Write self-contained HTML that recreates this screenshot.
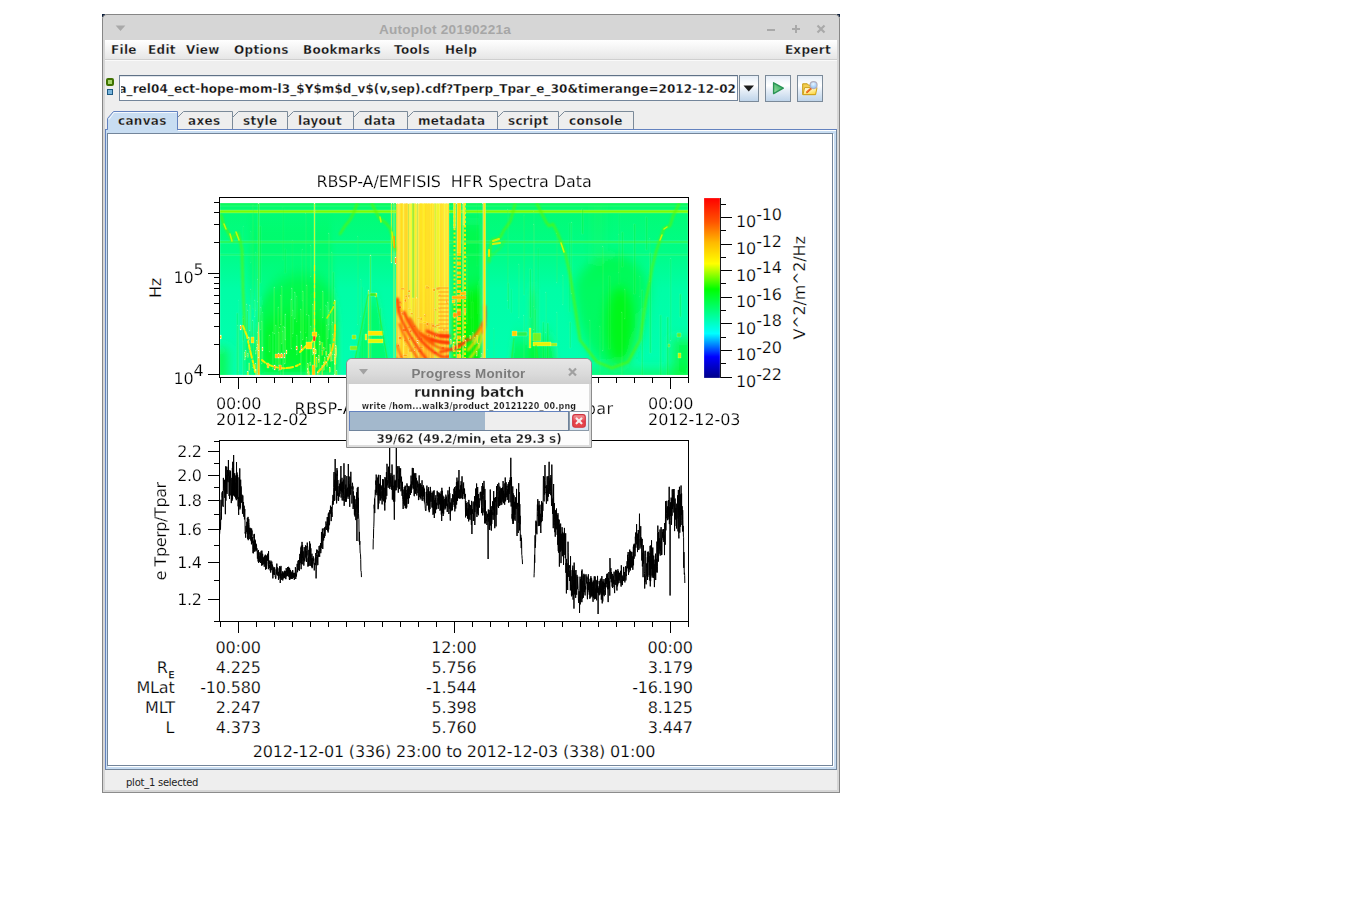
<!DOCTYPE html><html><head><meta charset="utf-8"><title>Autoplot 20190221a</title><style>
html,body{margin:0;padding:0;background:#fff;}
body{width:1345px;height:916px;overflow:hidden;position:relative;font-family:"DejaVu Sans","Liberation Sans",sans-serif;}
.abs{position:absolute;}
#win{position:absolute;left:102px;top:14px;width:738px;height:779px;background:#d6d6d6;border-radius:5px 5px 0 0;box-sizing:border-box;border:1px solid #868686;border-bottom-color:#8c8c8c;}
.b13{font:bold 12px "DejaVu Sans","Liberation Sans",sans-serif;letter-spacing:0.3px;color:#151515;white-space:nowrap;position:absolute;line-height:16px;-webkit-text-stroke:0.35px rgba(255,255,255,0.75);}
#menubar{position:absolute;left:105px;top:40px;width:732px;height:19px;background:linear-gradient(#ffffff,#f4f4f4 45%,#e6e6e6);border-bottom:1px solid #cfcfcf;}
#main{position:absolute;left:105px;top:60px;width:732px;height:730px;background:#eeeeee;border-top:1px solid #fafafa;box-sizing:border-box;}
.btn{position:absolute;box-sizing:border-box;border:1px solid #7b8a99;background:linear-gradient(#e4ecf6 0%,#f4f8fc 20%,#ffffff 38%,#e6eef7 58%,#bfd4ea 100%);}
.tab{position:absolute;box-sizing:border-box;}
</style></head><body>
<div class="abs" style="left:102px;top:14px;width:3px;height:3px;background:#0b1d3a"></div>
<div class="abs" style="left:837px;top:14px;width:3px;height:3px;background:#0b1d3a"></div>
<div id="win"></div>
<svg class="abs" style="left:115px;top:23.6px" width="12" height="8"><path d="M0.6 1.6 L10.4 1.6 L5.5 7 Z" fill="#a9a9a9"/></svg>
<div class="abs" style="left:378.5px;top:20.8px;width:133px;text-align:center;font:bold 13.6px 'Liberation Sans',sans-serif;letter-spacing:0.25px;color:#a6a6a6;white-space:nowrap;line-height:17px">Autoplot 20190221a</div>
<svg class="abs" style="left:760px;top:20px" width="76" height="18"><g stroke="#a9a9a9" stroke-width="2" fill="none"><path d="M7 10 H15"/><path d="M32 9 H40 M36 5 V13"/><path d="M57.5 5.5 L64.5 12.5 M64.5 5.5 L57.5 12.5" stroke-width="2.2"/></g></svg>
<div id="menubar"></div>
<div class="b13" style="left:111px;top:42px">File</div>
<div class="b13" style="left:148px;top:42px">Edit</div>
<div class="b13" style="left:186px;top:42px">View</div>
<div class="b13" style="left:234px;top:42px">Options</div>
<div class="b13" style="left:303px;top:42px">Bookmarks</div>
<div class="b13" style="left:394px;top:42px">Tools</div>
<div class="b13" style="left:445px;top:42px">Help</div>
<div class="b13" style="left:700px;width:131px;text-align:right;top:42px">Expert</div>
<div id="main"></div>
<div class="abs" style="left:106px;top:78px;width:8px;height:8px;box-sizing:border-box;border:2px solid #3f7200;border-radius:2px;background:#a5d46a"></div>
<div class="abs" style="left:107px;top:89px;width:6px;height:6px;box-sizing:border-box;border:1px solid #1d5a85;background:#79b5dc"></div>
<div class="abs" style="left:119px;top:75px;width:619px;height:26px;box-sizing:border-box;border:1px solid #73859a;border-top-color:#5f7186;background:#fff;box-shadow:inset 0 1px 0 #dfe4ea"></div>
<div class="abs" style="left:121px;top:77px;width:616px;height:22px;overflow:hidden"><div class="b13" style="right:1px;top:4px;color:#111;letter-spacing:0.07px">rbsp-a_rel04_ect-hope-mom-l3_$Y$m$d_v$(v,sep).cdf?Tperp_Tpar_e_30&amp;timerange=2012-12-02</div></div>
<div class="btn" style="left:739px;top:75px;width:20px;height:27px"></div>
<svg class="abs" style="left:739px;top:75px" width="20" height="27"><path d="M4.5 10.5 L15 10.5 L9.75 16.5 Z" fill="#1c1c1c"/></svg>
<div class="btn" style="left:765px;top:75px;width:26px;height:27px"></div>
<svg class="abs" style="left:765px;top:75px" width="26" height="27"><defs><linearGradient id="pg1" x1="0" y1="1" x2="1" y2="0"><stop offset="0" stop-color="#a8e0a8"/><stop offset="0.5" stop-color="#5cc27a"/><stop offset="1" stop-color="#2fa35a"/></linearGradient></defs><path d="M8.6 7.8 L18.3 13.2 L8.6 18.6 Z" fill="url(#pg1)" stroke="#2a9455" stroke-width="1.4" stroke-linejoin="round"/></svg>
<div class="btn" style="left:797px;top:75px;width:26px;height:27px"></div>
<svg class="abs" style="left:797px;top:75px" width="26" height="27">
<defs><linearGradient id="fg1" x1="0" y1="0" x2="0.6" y2="1"><stop offset="0" stop-color="#fffdf0"/><stop offset="0.55" stop-color="#fff0a0"/><stop offset="1" stop-color="#ffd84a"/></linearGradient>
<radialGradient id="mg1" cx="0.45" cy="0.35" r="0.7"><stop offset="0" stop-color="#eaf5ff"/><stop offset="0.5" stop-color="#b6d8fc"/><stop offset="1" stop-color="#8fc0f4"/></radialGradient></defs>
<path d="M5.7 8.8 H10.3 L11.6 10.2 H18.4 V19.6 H5.7 Z" fill="#f3cf52" stroke="#c79b10" stroke-width="1"/>
<path d="M6 19.6 L7.6 12.6 H20 L18.6 19.6 Z" fill="url(#fg1)" stroke="#cfa21a" stroke-width="1" stroke-linejoin="round"/>
<path d="M9.9 17.4 L14.3 13.2" stroke="#f28a1e" stroke-width="1.9" stroke-linecap="round"/>
<path d="M9.9 17.4 L14.3 13.2" stroke="#e0452a" stroke-width="1.9" stroke-dasharray="0.7 0.9"/>
<circle cx="16.6" cy="10.1" r="3.5" fill="url(#mg1)" stroke="#b3aebd" stroke-width="1.1"/>
</svg>
<svg class="abs" style="left:100px;top:105px" width="745" height="670"><rect x="5.5" y="24.5" width="731.0" height="640.0" fill="#c8ddf2" stroke="#6382bf"/><path d="M736.5 25 V664.5 H5" fill="none" stroke="#73859a"/><path d="M733.5 29 V661.5 H8" fill="none" stroke="#ffffff"/><rect x="7.5" y="28.5" width="725.0" height="632.0" fill="#ffffff" stroke="#73859a"/><path d="M77.5 24.5 L77.5 12.5 L83.5 6.5 L132.5 6.5 L132.5 24.5" fill="#eeeeee" stroke="#7b8a99"/><path d="M132.5 24.5 L132.5 12.5 L138.5 6.5 L187.5 6.5 L187.5 24.5" fill="#eeeeee" stroke="#7b8a99"/><path d="M187.5 24.5 L187.5 12.5 L193.5 6.5 L253.5 6.5 L253.5 24.5" fill="#eeeeee" stroke="#7b8a99"/><path d="M253.5 24.5 L253.5 12.5 L259.5 6.5 L307.5 6.5 L307.5 24.5" fill="#eeeeee" stroke="#7b8a99"/><path d="M307.5 24.5 L307.5 12.5 L313.5 6.5 L397.5 6.5 L397.5 24.5" fill="#eeeeee" stroke="#7b8a99"/><path d="M397.5 24.5 L397.5 12.5 L403.5 6.5 L458.5 6.5 L458.5 24.5" fill="#eeeeee" stroke="#7b8a99"/><path d="M458.5 24.5 L458.5 12.5 L464.5 6.5 L533.5 6.5 L533.5 24.5" fill="#eeeeee" stroke="#7b8a99"/><path d="M7.5 26 L7.5 13.5 L13.5 6.5 L77.5 6.5 L77.5 24.5 L77.5 26 Z" fill="#c8ddf2" stroke="none"/><path d="M5.5 24.5 L7.5 24.5 L7.5 13.5 L13.5 6.5 L77.5 6.5 L77.5 24.5" fill="none" stroke="#6382bf"/><path d="M77 24.5 H737" stroke="#6382bf" fill="none"/><path d="M78 25.5 H736" stroke="#ffffff" fill="none"/><path d="M9 14.5 L14 7.5 H77" stroke="#f4f8fd" fill="none"/></svg>
<div class="b13" style="left:118px;top:113px">canvas</div>
<div class="b13" style="left:188px;top:113px">axes</div>
<div class="b13" style="left:243px;top:113px">style</div>
<div class="b13" style="left:298px;top:113px">layout</div>
<div class="b13" style="left:364px;top:113px">data</div>
<div class="b13" style="left:418px;top:113px">metadata</div>
<div class="b13" style="left:508px;top:113px">script</div>
<div class="b13" style="left:569px;top:113px">console</div>
<div class="abs" style="left:126px;top:776px;font:10px 'DejaVu Sans',sans-serif;letter-spacing:-0.25px;color:#222;line-height:14px;white-space:nowrap">plot_1 selected</div>
<svg class="abs" style="left:108px;top:134px" width="726" height="632" viewBox="108 134 726 632" font-family="'DejaVu Sans','Liberation Sans',sans-serif" font-size="16" fill="#000" stroke="#ffffff" stroke-width="0.22" text-rendering="geometricPrecision">
<defs>
<linearGradient id="cb" x1="0" y1="1" x2="0" y2="0">
<stop offset="0" stop-color="#000089"/><stop offset="0.1176" stop-color="#0000ff"/><stop offset="0.247" stop-color="#00ffff"/><stop offset="0.494" stop-color="#00ff00"/><stop offset="0.635" stop-color="#ffff00"/><stop offset="0.753" stop-color="#ffb900"/><stop offset="0.867" stop-color="#ff5400"/><stop offset="1" stop-color="#ff0000"/>
</linearGradient>
<linearGradient id="base" x1="0" y1="0" x2="0" y2="1">
<stop offset="0" stop-color="#08fc66"/><stop offset="0.05" stop-color="#02fc76"/><stop offset="0.28" stop-color="#00fd86"/><stop offset="0.5" stop-color="#00fea6"/><stop offset="1" stop-color="#00ffb2"/>
</linearGradient>
<filter id="bl6" x="-30%" y="-30%" width="160%" height="160%"><feGaussianBlur stdDeviation="6"/></filter>
<filter id="blv" x="-30%" y="-30%" width="160%" height="160%"><feGaussianBlur stdDeviation="2.2 9"/></filter>
<filter id="bl3" x="-30%" y="-30%" width="160%" height="160%"><feGaussianBlur stdDeviation="3"/></filter>
<filter id="bl1" x="-30%" y="-30%" width="160%" height="160%"><feGaussianBlur stdDeviation="0.8"/></filter>
<linearGradient id="coreg" x1="0" y1="0" x2="0" y2="1"><stop offset="0" stop-color="#ffe800"/><stop offset="0.42" stop-color="#ffdc00"/><stop offset="0.62" stop-color="#ffbc00"/><stop offset="0.8" stop-color="#ffa000"/><stop offset="1" stop-color="#ff9400"/></linearGradient>
<clipPath id="sp"><rect x="220" y="203" width="468" height="172"/></clipPath>
<clipPath id="core"><rect x="396" y="203" width="53" height="172"/></clipPath>
<clipPath id="p2"><rect x="220" y="441" width="468" height="180"/></clipPath>
</defs>
<g clip-path="url(#sp)">
<rect x="220" y="203" width="468" height="172" fill="url(#base)"/>
<g filter="url(#blv)" fill="#00f600">
<path d="M256 380 L256 325 Q260 296 274 286 Q300 266 326 284 Q337 294 339 325 L339 380 Z" opacity="0.5"/>
<path d="M264 372 L264 324 Q295 298 328 320 L332 372 Z" opacity="0.5"/>
<path d="M243 380 L243 335 L257 335 L257 380 Z" opacity="0.3"/>
<path d="M246 300 L250 225 L330 225 L336 300 Z" opacity="0.15"/>
<path d="M451 380 L451 296 L482 286 L482 380 Z" opacity="0.9"/>
<rect x="451" y="222" width="31" height="90" opacity="0.4"/>
<path d="M352 380 L366 300 L378 300 L392 380 Z" opacity="0.35"/>
<path d="M508 380 L513 340 L552 338 L560 380 Z" opacity="0.45"/>
<rect x="529" y="290" width="8" height="90" opacity="0.35"/>
</g>
<g filter="url(#bl6)" fill="#00f600">
<rect x="212" y="348" width="16" height="36" opacity="0.6"/>
<path d="M573 286 Q578 340 598 362 Q612 372 628 362 Q644 338 649 286 Q640 258 612 254 Q585 258 573 286 Z" opacity="0.42"/>
<ellipse cx="620" cy="326" rx="14" ry="40" opacity="0.75"/>
<rect x="672" y="338" width="22" height="44" opacity="0.55"/>
<rect x="560" y="369" width="130" height="12" opacity="0.45"/>
<rect x="596" y="203" width="4" height="60" opacity="0.5"/>
</g>
<rect x="220" y="203" width="468" height="3" fill="#10f858" opacity="0.6"/>
<rect x="220" y="210.2" width="468" height="2.6" fill="#8cff00"/>
<rect x="220" y="209.7" width="468" height="3.6" fill="#50fc00" opacity="0.3"/>
<rect x="220" y="241" width="468" height="2" fill="#18f840" opacity="0.8"/>
<rect x="220" y="254" width="468" height="1.5" fill="#18f850" opacity="0.45"/>
<rect x="332.4" y="272" width="2" height="57" fill="#10f020" opacity="0.23"/>
<rect x="252.4" y="205" width="1.5" height="104" fill="#10f020" opacity="0.21"/>
<rect x="311.0" y="294" width="2" height="74" fill="#10f020" opacity="0.18"/>
<rect x="621.5" y="232" width="2" height="35" fill="#10f020" opacity="0.25"/>
<rect x="533.5" y="211" width="1" height="96" fill="#10f020" opacity="0.16"/>
<rect x="236.4" y="313" width="2" height="67" fill="#10f020" opacity="0.24"/>
<rect x="649.4" y="253" width="2" height="100" fill="#10f020" opacity="0.29"/>
<rect x="284.2" y="249" width="2" height="24" fill="#10f020" opacity="0.14"/>
<rect x="670.0" y="258" width="1.5" height="83" fill="#10f020" opacity="0.18"/>
<rect x="608.7" y="276" width="2" height="73" fill="#10f020" opacity="0.22"/>
<rect x="641.5" y="290" width="1.5" height="113" fill="#10f020" opacity="0.30"/>
<rect x="533.5" y="224" width="1" height="106" fill="#10f020" opacity="0.24"/>
<rect x="320.0" y="309" width="1.5" height="77" fill="#10f020" opacity="0.12"/>
<rect x="518.4" y="264" width="1" height="54" fill="#10f020" opacity="0.18"/>
<rect x="292.0" y="240" width="1" height="97" fill="#10f020" opacity="0.11"/>
<rect x="507.1" y="209" width="1.5" height="92" fill="#10f020" opacity="0.21"/>
<rect x="649.8" y="238" width="1" height="44" fill="#10f020" opacity="0.16"/>
<rect x="257.7" y="279" width="1" height="23" fill="#10f020" opacity="0.29"/>
<rect x="357.3" y="236" width="1.5" height="89" fill="#10f020" opacity="0.16"/>
<rect x="666.8" y="317" width="2" height="58" fill="#10f020" opacity="0.27"/>
<rect x="624.2" y="289" width="1.5" height="30" fill="#10f020" opacity="0.19"/>
<rect x="556.2" y="233" width="1.5" height="50" fill="#10f020" opacity="0.20"/>
<rect x="476.5" y="204" width="1.5" height="62" fill="#10f020" opacity="0.10"/>
<rect x="507.7" y="283" width="1.5" height="26" fill="#10f020" opacity="0.19"/>
<rect x="537.2" y="248" width="2" height="91" fill="#10f020" opacity="0.10"/>
<rect x="250.1" y="289" width="1.5" height="116" fill="#10f020" opacity="0.23"/>
<rect x="360.6" y="279" width="1" height="38" fill="#10f020" opacity="0.16"/>
<rect x="393.3" y="279" width="2" height="50" fill="#10f020" opacity="0.12"/>
<rect x="599.3" y="326" width="1" height="88" fill="#10f020" opacity="0.16"/>
<rect x="325.3" y="305" width="1" height="44" fill="#10f020" opacity="0.24"/>
<rect x="523.4" y="215" width="1.5" height="80" fill="#10f020" opacity="0.23"/>
<rect x="326.1" y="306" width="1" height="116" fill="#10f020" opacity="0.17"/>
<rect x="523.7" y="315" width="1" height="65" fill="#10f020" opacity="0.26"/>
<rect x="237.7" y="325" width="1" height="52" fill="#10f020" opacity="0.27"/>
<rect x="379.8" y="308" width="1.5" height="29" fill="#10f020" opacity="0.22"/>
<rect x="462.5" y="311" width="2" height="66" fill="#10f020" opacity="0.16"/>
<rect x="485.7" y="208" width="1" height="61" fill="#10f020" opacity="0.10"/>
<rect x="659.7" y="315" width="2" height="119" fill="#10f020" opacity="0.21"/>
<rect x="679.4" y="294" width="2" height="23" fill="#10f020" opacity="0.27"/>
<rect x="529.6" y="269" width="1.5" height="49" fill="#10f020" opacity="0.28"/>
<rect x="621.8" y="312" width="1" height="117" fill="#10f020" opacity="0.26"/>
<rect x="242.9" y="318" width="1" height="89" fill="#10f020" opacity="0.28"/>
<rect x="639.4" y="276" width="1" height="21" fill="#10f020" opacity="0.13"/>
<rect x="361.1" y="287" width="2" height="72" fill="#10f020" opacity="0.11"/>
<rect x="645.7" y="217" width="2" height="33" fill="#10f020" opacity="0.26"/>
<rect x="250.5" y="231" width="1" height="32" fill="#10f020" opacity="0.13"/>
<rect x="589.3" y="320" width="1" height="101" fill="#10f020" opacity="0.20"/>
<rect x="486.9" y="254" width="1" height="96" fill="#10f020" opacity="0.15"/>
<rect x="466.7" y="257" width="1" height="67" fill="#10f020" opacity="0.27"/>
<rect x="581.7" y="209" width="2" height="25" fill="#10f020" opacity="0.29"/>
<rect x="618.5" y="214" width="1.5" height="70" fill="#10f020" opacity="0.13"/>
<rect x="255.3" y="252" width="1.5" height="59" fill="#10f020" opacity="0.17"/>
<rect x="310.7" y="245" width="1" height="32" fill="#10f020" opacity="0.24"/>
<rect x="259.1" y="226" width="2" height="57" fill="#10f020" opacity="0.23"/>
<rect x="242.2" y="316" width="2" height="25" fill="#10f020" opacity="0.25"/>
<rect x="368.1" y="324" width="1" height="62" fill="#10f020" opacity="0.15"/>
<rect x="470.6" y="291" width="2" height="27" fill="#10f020" opacity="0.14"/>
<rect x="282.5" y="207" width="1.5" height="53" fill="#10f020" opacity="0.12"/>
<rect x="542.4" y="322" width="2" height="93" fill="#10f020" opacity="0.23"/>
<rect x="562.5" y="275" width="1" height="30" fill="#10f020" opacity="0.19"/>
<rect x="331.5" y="252" width="1" height="73" fill="#10f020" opacity="0.23"/>
<rect x="602.2" y="246" width="1" height="105" fill="#10f020" opacity="0.27"/>
<rect x="534.5" y="309" width="1.5" height="115" fill="#10f020" opacity="0.26"/>
<rect x="238.8" y="300" width="1" height="71" fill="#10f020" opacity="0.12"/>
<rect x="569.5" y="322" width="1.5" height="26" fill="#10f020" opacity="0.27"/>
<rect x="305.7" y="213" width="1" height="120" fill="#10f020" opacity="0.19"/>
<rect x="546.9" y="323" width="2" height="45" fill="#10f020" opacity="0.29"/>
<rect x="480.3" y="326" width="1" height="58" fill="#10f020" opacity="0.29"/>
<rect x="568.8" y="223" width="2" height="89" fill="#10f020" opacity="0.13"/>
<rect x="633.8" y="224" width="2" height="70" fill="#10f020" opacity="0.28"/>
<rect x="462.0" y="259" width="1" height="92" fill="#10f020" opacity="0.13"/>
<rect x="571.0" y="222" width="1" height="72" fill="#10f020" opacity="0.27"/>
<rect x="471.6" y="302" width="2" height="87" fill="#10f020" opacity="0.22"/>
<rect x="493.2" y="328" width="1.5" height="109" fill="#10f020" opacity="0.10"/>
<rect x="301.9" y="249" width="1" height="52" fill="#10f020" opacity="0.18"/>
<rect x="545.7" y="292" width="1" height="41" fill="#10f020" opacity="0.20"/>
<rect x="556.4" y="312" width="1" height="60" fill="#10f020" opacity="0.19"/>
<rect x="328.5" y="233" width="1" height="92" fill="#10f020" opacity="0.29"/>
<rect x="618.2" y="234" width="1.5" height="39" fill="#10f020" opacity="0.13"/>
<rect x="510.6" y="289" width="1.5" height="24" fill="#10f020" opacity="0.13"/>
<rect x="242.9" y="226" width="1" height="29" fill="#10f020" opacity="0.12"/>
<rect x="269.0" y="335" width="1" height="17" fill="#00e800" opacity="0.40"/>
<rect x="306.5" y="285" width="1" height="30" fill="#00e800" opacity="0.34"/>
<rect x="252.1" y="320" width="1" height="48" fill="#00e800" opacity="0.35"/>
<rect x="294.5" y="292" width="1" height="27" fill="#20ff60" opacity="0.36"/>
<rect x="284.9" y="314" width="1" height="26" fill="#20ff60" opacity="0.49"/>
<rect x="279.1" y="327" width="1" height="49" fill="#00e800" opacity="0.42"/>
<rect x="306.0" y="337" width="1" height="52" fill="#40ff20" opacity="0.44"/>
<rect x="332.5" y="322" width="1" height="39" fill="#40ff20" opacity="0.42"/>
<rect x="291.3" y="288" width="1" height="28" fill="#20ff60" opacity="0.39"/>
<rect x="261.6" y="321" width="1" height="43" fill="#40ff20" opacity="0.34"/>
<rect x="328.7" y="310" width="1" height="20" fill="#20ff60" opacity="0.29"/>
<rect x="275.2" y="325" width="1" height="42" fill="#20ff60" opacity="0.33"/>
<rect x="262.0" y="312" width="1" height="50" fill="#20ff60" opacity="0.27"/>
<rect x="310.1" y="326" width="1" height="39" fill="#20ff60" opacity="0.35"/>
<rect x="254.1" y="300" width="1" height="17" fill="#40ff20" opacity="0.26"/>
<rect x="290.9" y="299" width="1" height="50" fill="#00e800" opacity="0.47"/>
<rect x="331.0" y="310" width="1" height="51" fill="#40ff20" opacity="0.34"/>
<rect x="322.1" y="291" width="1" height="27" fill="#40ff20" opacity="0.42"/>
<rect x="296.4" y="335" width="1" height="20" fill="#20ff60" opacity="0.30"/>
<rect x="282.9" y="326" width="1" height="52" fill="#20ff60" opacity="0.28"/>
<rect x="300.3" y="332" width="1" height="51" fill="#20ff60" opacity="0.38"/>
<rect x="296.7" y="296" width="1" height="26" fill="#00e800" opacity="0.26"/>
<rect x="318.1" y="334" width="1" height="58" fill="#00e800" opacity="0.33"/>
<rect x="327.5" y="302" width="1" height="37" fill="#20ff60" opacity="0.42"/>
<rect x="272.2" y="332" width="1" height="37" fill="#20ff60" opacity="0.30"/>
<rect x="302.7" y="291" width="1" height="49" fill="#40ff20" opacity="0.37"/>
<rect x="292.7" y="310" width="1" height="24" fill="#20ff60" opacity="0.30"/>
<rect x="319.0" y="336" width="1" height="58" fill="#40ff20" opacity="0.39"/>
<rect x="332.3" y="334" width="1" height="21" fill="#40ff20" opacity="0.41"/>
<rect x="249.6" y="305" width="1" height="26" fill="#40ff20" opacity="0.37"/>
<rect x="246.7" y="304" width="1" height="30" fill="#00e800" opacity="0.42"/>
<rect x="257.2" y="332" width="1" height="42" fill="#40ff20" opacity="0.43"/>
<rect x="312.3" y="304" width="1" height="51" fill="#40ff20" opacity="0.47"/>
<rect x="284.8" y="327" width="1" height="37" fill="#40ff20" opacity="0.45"/>
<rect x="282.2" y="331" width="1" height="47" fill="#00e800" opacity="0.37"/>
<rect x="308.6" y="315" width="1" height="34" fill="#20ff60" opacity="0.37"/>
<rect x="247.1" y="310" width="1" height="46" fill="#00e800" opacity="0.30"/>
<rect x="326.8" y="325" width="1" height="32" fill="#00e800" opacity="0.36"/>
<rect x="277.9" y="307" width="1" height="59" fill="#40ff20" opacity="0.31"/>
<rect x="278.6" y="332" width="1" height="39" fill="#40ff20" opacity="0.30"/>
<rect x="260.5" y="307" width="1" height="23" fill="#40ff20" opacity="0.28"/>
<rect x="300.4" y="309" width="1" height="23" fill="#40ff20" opacity="0.35"/>
<rect x="273.9" y="287" width="1" height="47" fill="#40ff20" opacity="0.35"/>
<rect x="281.1" y="286" width="1" height="58" fill="#40ff20" opacity="0.31"/>
<rect x="280.4" y="295" width="1" height="30" fill="#40ff20" opacity="0.34"/>
<rect x="258" y="203" width="1.3" height="172" fill="#30f020" opacity="0.6"/>
<path d="M258.6 322 L259.6 345 L259.8 375 L257.6 375 L257.8 345 Z" fill="#ffc400"/>
<rect x="314" y="203" width="1" height="172" fill="#b0ff00"/>
<path d="M314.5 265 V375" stroke="#fff000" stroke-width="1.2" stroke-dasharray="6 3 9 2 3 4"/>
<rect x="334.5" y="300" width="1" height="75" fill="#d0f000" opacity="0.8"/>
<rect x="370" y="255" width="1" height="120" fill="#20f020" opacity="0.7"/>
<rect x="368" y="290" width="1" height="85" fill="#c0f000" opacity="0.7"/>
<rect x="391" y="203" width="1" height="60" fill="#c0f800" opacity="0.8"/><rect x="393.5" y="203" width="1" height="172" fill="#a0f400" opacity="0.7"/>
<rect x="396" y="203" width="53" height="172" fill="url(#coreg)"/>
<g clip-path="url(#core)">
<rect x="400" y="203" width="9" height="172" fill="#ffcc00" opacity="0.75"/>
<rect x="419" y="203" width="14" height="120" fill="#ffe400" opacity="0.7"/>
<rect x="440" y="203" width="4" height="172" fill="#ffd000" opacity="0.6"/>
<rect x="396" y="203" width="1.2" height="172" fill="#a0f000" opacity="0.9"/>
<rect x="398.3" y="203" width="1" height="172" fill="#ffff40" opacity="0.9"/>
<rect x="403" y="203" width="1" height="172" fill="#f8ff30" opacity="0.8"/>
<rect x="408" y="203" width="1" height="95" fill="#70f000" opacity="1"/>
<rect x="410.5" y="203" width="1.5" height="172" fill="#e8ff00" opacity="0.9"/>
<rect x="412.2" y="203" width="2.3" height="95" fill="#38f000" opacity="1"/>
<rect x="416.8" y="203" width="1" height="95" fill="#50f000" opacity="1"/>
<rect x="418" y="203" width="1" height="172" fill="#f0ff20" opacity="0.8"/>
<rect x="434.5" y="203" width="1.5" height="172" fill="#a8f800" opacity="1"/>
<rect x="436.5" y="203" width="3" height="172" fill="#d8ff00" opacity="0.8"/>
<rect x="444" y="203" width="2" height="172" fill="#f4ff20" opacity="0.8"/>
<rect x="447.5" y="203" width="1.5" height="172" fill="#ffd000" opacity="0.8"/>
<rect x="408" y="298" width="1" height="77" fill="#d8f000" opacity="0.6"/>
<rect x="412.2" y="298" width="2.3" height="77" fill="#c8f000" opacity="0.6"/>
<rect x="416.8" y="298" width="1" height="77" fill="#d0f000" opacity="0.6"/>
<rect x="396" y="203" width="1" height="172" fill="#ffd400" opacity="0.40"/>
<rect x="397" y="203" width="1" height="172" fill="#ffc800" opacity="0.47"/>
<rect x="398" y="203" width="1" height="172" fill="#ffc800" opacity="0.55"/>
<rect x="399" y="203" width="1" height="172" fill="#ffc800" opacity="0.53"/>
<rect x="400" y="203" width="1" height="172" fill="#fff000" opacity="0.31"/>
<rect x="401" y="203" width="1" height="172" fill="#fff000" opacity="0.33"/>
<rect x="402" y="203" width="1" height="172" fill="#fff400" opacity="0.25"/>
<rect x="403" y="203" width="1" height="172" fill="#fff000" opacity="0.40"/>
<rect x="404" y="203" width="1" height="172" fill="#ffd400" opacity="0.53"/>
<rect x="405" y="203" width="1" height="172" fill="#ffd400" opacity="0.57"/>
<rect x="406" y="203" width="1" height="172" fill="#ffdc00" opacity="0.26"/>
<rect x="407" y="203" width="1" height="172" fill="#ffdc00" opacity="0.52"/>
<rect x="408" y="203" width="1" height="172" fill="#ffc800" opacity="0.47"/>
<rect x="409" y="203" width="1" height="172" fill="#fff400" opacity="0.58"/>
<rect x="410" y="203" width="1" height="172" fill="#fff000" opacity="0.42"/>
<rect x="411" y="203" width="1" height="172" fill="#fff400" opacity="0.48"/>
<rect x="412" y="203" width="1" height="172" fill="#ffe800" opacity="0.26"/>
<rect x="413" y="203" width="1" height="172" fill="#ffdc00" opacity="0.54"/>
<rect x="414" y="203" width="1" height="172" fill="#fff400" opacity="0.53"/>
<rect x="415" y="203" width="1" height="172" fill="#fff400" opacity="0.41"/>
<rect x="416" y="203" width="1" height="172" fill="#fff000" opacity="0.50"/>
<rect x="417" y="203" width="1" height="172" fill="#ffc800" opacity="0.42"/>
<rect x="418" y="203" width="1" height="172" fill="#ffd400" opacity="0.48"/>
<rect x="419" y="203" width="1" height="172" fill="#ffc800" opacity="0.55"/>
<rect x="420" y="203" width="1" height="172" fill="#ffd400" opacity="0.28"/>
<rect x="421" y="203" width="1" height="172" fill="#ffd400" opacity="0.32"/>
<rect x="422" y="203" width="1" height="172" fill="#ffdc00" opacity="0.51"/>
<rect x="423" y="203" width="1" height="172" fill="#fff000" opacity="0.60"/>
<rect x="424" y="203" width="1" height="172" fill="#fff400" opacity="0.29"/>
<rect x="425" y="203" width="1" height="172" fill="#ffc800" opacity="0.45"/>
<rect x="426" y="203" width="1" height="172" fill="#ffc800" opacity="0.32"/>
<rect x="427" y="203" width="1" height="172" fill="#ffd400" opacity="0.56"/>
<rect x="428" y="203" width="1" height="172" fill="#ffc800" opacity="0.35"/>
<rect x="429" y="203" width="1" height="172" fill="#ffc800" opacity="0.43"/>
<rect x="430" y="203" width="1" height="172" fill="#ffe800" opacity="0.60"/>
<rect x="431" y="203" width="1" height="172" fill="#ffc800" opacity="0.34"/>
<rect x="432" y="203" width="1" height="172" fill="#fff400" opacity="0.31"/>
<rect x="433" y="203" width="1" height="172" fill="#ffdc00" opacity="0.60"/>
<rect x="434" y="203" width="1" height="172" fill="#ffc800" opacity="0.25"/>
<rect x="435" y="203" width="1" height="172" fill="#fff400" opacity="0.44"/>
<rect x="436" y="203" width="1" height="172" fill="#ffdc00" opacity="0.43"/>
<rect x="437" y="203" width="1" height="172" fill="#fff000" opacity="0.46"/>
<rect x="438" y="203" width="1" height="172" fill="#fff000" opacity="0.59"/>
<rect x="439" y="203" width="1" height="172" fill="#fff400" opacity="0.31"/>
<rect x="440" y="203" width="1" height="172" fill="#ffd400" opacity="0.47"/>
<rect x="441" y="203" width="1" height="172" fill="#ffe800" opacity="0.37"/>
<rect x="442" y="203" width="1" height="172" fill="#fff000" opacity="0.58"/>
<rect x="443" y="203" width="1" height="172" fill="#ffd400" opacity="0.29"/>
<rect x="444" y="203" width="1" height="172" fill="#fff400" opacity="0.57"/>
<rect x="445" y="203" width="1" height="172" fill="#ffd400" opacity="0.52"/>
<rect x="446" y="203" width="1" height="172" fill="#ffe800" opacity="0.31"/>
<rect x="447" y="203" width="1" height="172" fill="#fff400" opacity="0.49"/>
<rect x="448" y="203" width="1" height="172" fill="#ffdc00" opacity="0.59"/>
<rect x="420.2" y="317.5" width="1.8" height="2.8" fill="#ff8400" opacity="0.54"/>
<rect x="420.2" y="337.6" width="2.3" height="2.9" fill="#ff8400" opacity="0.69"/>
<rect x="405.5" y="367.3" width="3.9" height="2.1" fill="#ff9c00" opacity="0.50"/>
<rect x="402.5" y="329.0" width="3.8" height="2.4" fill="#ff7000" opacity="0.72"/>
<rect x="441.4" y="364.9" width="2.0" height="1.8" fill="#ff7000" opacity="0.76"/>
<rect x="435.6" y="364.3" width="2.5" height="2.0" fill="#ff8400" opacity="0.48"/>
<rect x="441.3" y="361.5" width="1.6" height="2.1" fill="#ff7000" opacity="0.46"/>
<rect x="408.8" y="349.1" width="3.6" height="2.9" fill="#ff8400" opacity="0.45"/>
<rect x="425.9" y="362.9" width="2.0" height="1.5" fill="#ff8400" opacity="0.45"/>
<rect x="442.9" y="328.6" width="2.9" height="2.3" fill="#ff9c00" opacity="0.57"/>
<rect x="416.9" y="340.6" width="1.7" height="2.4" fill="#ff9c00" opacity="0.78"/>
<rect x="433.0" y="288.6" width="2.2" height="2.5" fill="#ff9c00" opacity="0.70"/>
<rect x="433.8" y="335.0" width="1.6" height="2.8" fill="#ff7000" opacity="0.78"/>
<rect x="408.8" y="338.2" width="1.6" height="2.0" fill="#ff8400" opacity="0.75"/>
<rect x="402.5" y="361.7" width="2.4" height="1.8" fill="#ff9c00" opacity="0.79"/>
<rect x="425.7" y="286.6" width="3.5" height="2.0" fill="#ff7000" opacity="0.44"/>
<rect x="408.1" y="308.5" width="3.5" height="2.0" fill="#ffd000" opacity="0.44"/>
<rect x="436.2" y="287.2" width="3.5" height="2.7" fill="#ff7000" opacity="0.54"/>
<rect x="435.9" y="334.2" width="1.7" height="2.5" fill="#ff8400" opacity="0.79"/>
<rect x="417.0" y="317.4" width="3.6" height="2.1" fill="#ffd000" opacity="0.47"/>
<rect x="439.2" y="307.5" width="1.6" height="3.0" fill="#ff9c00" opacity="0.51"/>
<rect x="405.2" y="295.5" width="1.9" height="1.6" fill="#ff7000" opacity="0.48"/>
<rect x="416.4" y="338.2" width="3.9" height="2.0" fill="#ff9c00" opacity="0.59"/>
<rect x="410.9" y="368.7" width="3.4" height="1.9" fill="#ff8400" opacity="0.43"/>
<rect x="419.6" y="346.2" width="3.4" height="2.1" fill="#ff9c00" opacity="0.67"/>
<rect x="410.7" y="337.0" width="3.0" height="2.0" fill="#ff8400" opacity="0.51"/>
<rect x="403.4" y="354.5" width="3.6" height="1.7" fill="#ff9c00" opacity="0.74"/>
<rect x="407.1" y="326.2" width="3.0" height="2.3" fill="#ff8400" opacity="0.47"/>
<rect x="421.1" y="367.3" width="2.8" height="2.9" fill="#ff8400" opacity="0.63"/>
<rect x="426.3" y="322.9" width="2.3" height="2.3" fill="#ff8400" opacity="0.75"/>
<rect x="425.7" y="368.1" width="1.7" height="1.8" fill="#ff9c00" opacity="0.44"/>
<rect x="432.0" y="324.5" width="2.7" height="2.5" fill="#ff8400" opacity="0.67"/>
<rect x="398.5" y="306.2" width="2.6" height="2.1" fill="#ff7000" opacity="0.75"/>
<rect x="398.8" y="336.9" width="3.0" height="2.5" fill="#ff7000" opacity="0.64"/>
<rect x="401.0" y="288.0" width="3.4" height="1.6" fill="#ff8400" opacity="0.54"/>
<rect x="420.5" y="331.6" width="1.6" height="2.7" fill="#ffd000" opacity="0.43"/>
<rect x="413.1" y="325.4" width="2.6" height="1.7" fill="#ff7000" opacity="0.79"/>
<rect x="438.6" y="294.2" width="2.4" height="1.8" fill="#ff9c00" opacity="0.48"/>
<rect x="408.1" y="294.6" width="1.8" height="2.9" fill="#ff8400" opacity="0.55"/>
<rect x="434.1" y="325.7" width="2.8" height="2.1" fill="#ff8400" opacity="0.49"/>
<rect x="409.8" y="330.1" width="2.0" height="2.2" fill="#ff8400" opacity="0.78"/>
<rect x="423.0" y="321.3" width="3.7" height="2.2" fill="#ffd000" opacity="0.64"/>
<rect x="408.0" y="290.1" width="2.2" height="2.0" fill="#ff9c00" opacity="0.79"/>
<rect x="436.3" y="363.5" width="3.8" height="2.8" fill="#ffd000" opacity="0.79"/>
<rect x="401.7" y="312.6" width="2.1" height="2.4" fill="#ff7000" opacity="0.63"/>
<rect x="441.0" y="362.6" width="2.6" height="1.6" fill="#ffd000" opacity="0.58"/>
<rect x="427.5" y="334.5" width="2.6" height="1.8" fill="#ff7000" opacity="0.42"/>
<rect x="401.6" y="312.6" width="1.6" height="1.8" fill="#ffd000" opacity="0.66"/>
<rect x="403.9" y="339.4" width="2.3" height="2.2" fill="#ff7000" opacity="0.48"/>
<rect x="424.1" y="314.2" width="1.5" height="2.3" fill="#ff7000" opacity="0.49"/>
<rect x="433.4" y="351.5" width="3.5" height="2.3" fill="#ff7000" opacity="0.69"/>
<rect x="411.2" y="331.4" width="1.7" height="1.5" fill="#ffd000" opacity="0.42"/>
<rect x="404.5" y="299.2" width="1.7" height="2.7" fill="#ff7000" opacity="0.66"/>
<rect x="416.8" y="362.3" width="2.8" height="1.7" fill="#ffd000" opacity="0.54"/>
<rect x="410.5" y="312.9" width="2.5" height="1.8" fill="#ff9c00" opacity="0.63"/>
<rect x="397.5" y="344.5" width="1.6" height="2.2" fill="#ff7000" opacity="0.76"/>
<rect x="434.7" y="308.7" width="1.9" height="2.2" fill="#ff9c00" opacity="0.47"/>
<rect x="404.3" y="344.0" width="3.4" height="1.6" fill="#ffd000" opacity="0.77"/>
<rect x="398.3" y="301.2" width="3.4" height="2.5" fill="#ff8400" opacity="0.58"/>
<rect x="414.0" y="350.1" width="1.8" height="2.1" fill="#ff9c00" opacity="0.74"/>
<rect x="425.4" y="285.9" width="2.9" height="1.6" fill="#ffd000" opacity="0.60"/>
<rect x="400.0" y="355.3" width="2.5" height="2.2" fill="#ff9c00" opacity="0.62"/>
<rect x="442.9" y="368.9" width="1.7" height="2.0" fill="#ff9c00" opacity="0.71"/>
<rect x="445.5" y="301.2" width="2.8" height="2.9" fill="#ffd000" opacity="0.67"/>
<rect x="445.7" y="300.1" width="1.6" height="2.8" fill="#ff9c00" opacity="0.66"/>
<rect x="413.9" y="346.5" width="2.3" height="2.1" fill="#ff8400" opacity="0.56"/>
<rect x="436.0" y="324.5" width="3.9" height="1.6" fill="#ff9c00" opacity="0.74"/>
<rect x="441.2" y="346.9" width="3.1" height="2.7" fill="#ff7000" opacity="0.74"/>
<rect x="436.5" y="365.2" width="1.9" height="2.1" fill="#ff7000" opacity="0.46"/>
<rect x="417.8" y="350.1" width="3.6" height="2.5" fill="#ff8400" opacity="0.60"/>
<g fill="none" stroke="#ff3400" stroke-width="2.3" stroke-linecap="round" filter="url(#bl1)">
<path d="M397.5 299 Q398 307 399 312" stroke-width="3"/>
<path d="M399 313 Q408 338 436 371"/>
<path d="M399.5 324 Q408 348 431 376" stroke="#ff4800" stroke-width="2"/>
<path d="M404 312 Q416 342 440 356 Q452 361 470 340" stroke-width="2.6"/>
<path d="M410 318 Q420 340 440 348 L449 349" stroke="#ff4c00" stroke-width="2"/>
<path d="M420 333 Q432 342 449 342.5" stroke-width="2.6"/>
<path d="M427 331 Q437 336.5 449 336.5" stroke-width="3"/>
<path d="M397 345 Q402 362 412 375" stroke="#ff5a00" stroke-width="1.8"/>
<path d="M397 358 Q400 368 405 376" stroke="#ff5a00" stroke-width="1.8"/>
<path d="M414 326 Q424 338 434 343" stroke="#ff6000" stroke-width="1.6"/>
</g>
<rect x="438" y="287" width="11" height="2" fill="#ff9c00" opacity="0.5"/>
<rect x="438" y="291" width="11" height="2" fill="#ff9c00" opacity="0.5"/>
<rect x="438" y="295" width="11" height="2" fill="#ff9c00" opacity="0.5"/>
<rect x="438" y="299" width="11" height="2" fill="#ff9c00" opacity="0.5"/>
<rect x="438" y="303" width="11" height="2" fill="#ff9c00" opacity="0.5"/>
<rect x="438" y="307" width="11" height="2" fill="#ff9c00" opacity="0.5"/>
<rect x="438" y="311" width="11" height="2" fill="#ff9c00" opacity="0.5"/>
<rect x="438" y="315" width="11" height="2" fill="#ff9c00" opacity="0.5"/>
<rect x="438" y="319" width="11" height="2" fill="#ff9c00" opacity="0.5"/>
<rect x="438" y="323" width="11" height="2" fill="#ff9c00" opacity="0.5"/>
<rect x="438" y="327" width="11" height="2" fill="#ff9c00" opacity="0.5"/>
<rect x="438" y="331" width="11" height="2" fill="#ff9c00" opacity="0.5"/>
</g>
<path d="M454.5 203 V375" stroke="#f0f000" stroke-width="2" stroke-dasharray="2 2.2"/>
<rect x="457" y="203" width="4" height="50" fill="#ffd800"/>
<path d="M459 253 V375" stroke="#ffd000" stroke-width="4" stroke-dasharray="3 1.5 2 2 4 1.5 2 2.5"/>
<rect x="462.6" y="203" width="1" height="172" fill="#e8f000" opacity="0.9"/>
<rect x="456" y="203" width="1" height="172" fill="#30f040"/>
<path d="M465 203 V375" stroke="#f0f000" stroke-width="2" stroke-dasharray="2.4 2"/>
<rect x="463.6" y="203" width="1.4" height="22" fill="#f0f000"/>
<rect x="453.5" y="203" width="2" height="25" fill="#f0f000"/>
<rect x="452" y="296" width="14" height="3" fill="#ffb000"/>
<rect x="460" y="292" width="6" height="3" fill="#ffc000"/>
<rect x="453" y="313" width="5" height="4" fill="#ffa000"/>
<rect x="457" y="311" width="4" height="5" fill="#ff9000"/>
<rect x="464" y="308" width="2" height="5" fill="#ffc000"/>
<rect x="452" y="300" width="3" height="3" fill="#ffd000"/>
<g fill="none" stroke-linecap="round" filter="url(#bl1)">
<path d="M449 336 H440" stroke="#ff3000" stroke-width="3"/>
<path d="M440 352 Q455 350 467 340" stroke="#ff3800" stroke-width="2.6"/>
<path d="M449 343 Q440 343 432 340" stroke="#ff3000" stroke-width="2.4"/>
<path d="M452 350 Q462 346 468 339" stroke="#ff3000" stroke-width="2.5"/>
<path d="M468 350 Q476 342 482 328" stroke="#ffd000" stroke-width="2.5"/>
<path d="M470 358 Q480 348 484 330" stroke="#ffe000" stroke-width="2"/>
<path d="M484.8 306 Q485.8 322 483 333" stroke="#ff3c00" stroke-width="2.2"/>
<path d="M470 340 Q479 333 483 322" stroke="#ff7000" stroke-width="2.2"/>
</g>
<rect x="469.9" y="362.6" width="1.2" height="7.8" fill="#f0f000" opacity="0.87"/>
<rect x="473.7" y="370.6" width="1.2" height="3.2" fill="#f0f000" opacity="0.63"/>
<rect x="480.2" y="358.6" width="1.2" height="8.4" fill="#f0f000" opacity="0.46"/>
<rect x="465.0" y="340.8" width="1.2" height="6.3" fill="#f0f000" opacity="0.69"/>
<rect x="450.4" y="339.5" width="1.2" height="4.7" fill="#f0f000" opacity="0.86"/>
<rect x="474.5" y="337.0" width="1.2" height="7.8" fill="#f0f000" opacity="0.47"/>
<rect x="469.8" y="335.6" width="1.2" height="3.0" fill="#f0f000" opacity="0.84"/>
<rect x="456.7" y="339.5" width="1.2" height="8.9" fill="#f0f000" opacity="0.84"/>
<rect x="459.3" y="372.3" width="1.2" height="6.2" fill="#f0f000" opacity="0.74"/>
<rect x="456.6" y="371.4" width="1.2" height="7.1" fill="#f0f000" opacity="0.88"/>
<rect x="478.6" y="343.1" width="1.2" height="5.2" fill="#f0f000" opacity="0.48"/>
<rect x="454.7" y="332.9" width="1.2" height="4.8" fill="#f0f000" opacity="0.70"/>
<rect x="450.1" y="359.8" width="1.2" height="5.0" fill="#f0f000" opacity="0.55"/>
<rect x="476.2" y="351.2" width="1.2" height="4.9" fill="#f0f000" opacity="0.64"/>
<rect x="472.5" y="332.5" width="1.2" height="8.9" fill="#f0f000" opacity="0.41"/>
<rect x="474.0" y="367.2" width="1.2" height="3.1" fill="#f0f000" opacity="0.79"/>
<rect x="461.7" y="355.5" width="1.2" height="3.1" fill="#f0f000" opacity="0.42"/>
<rect x="455.8" y="372.0" width="1.2" height="4.2" fill="#f0f000" opacity="0.78"/>
<rect x="479.7" y="371.4" width="1.2" height="5.1" fill="#f0f000" opacity="0.58"/>
<rect x="466.8" y="364.1" width="1.2" height="3.6" fill="#f0f000" opacity="0.77"/>
<rect x="475.5" y="367.8" width="1.2" height="3.2" fill="#f0f000" opacity="0.87"/>
<rect x="452.9" y="345.0" width="1.2" height="6.7" fill="#f0f000" opacity="0.86"/>
<rect x="460.9" y="370.7" width="1.2" height="6.3" fill="#f0f000" opacity="0.56"/>
<rect x="460.1" y="337.8" width="1.2" height="3.5" fill="#f0f000" opacity="0.47"/>
<rect x="472.1" y="373.9" width="1.2" height="4.0" fill="#f0f000" opacity="0.42"/>
<rect x="481.6" y="353.5" width="1.2" height="5.4" fill="#f0f000" opacity="0.52"/>
<rect x="469.0" y="366.4" width="1.2" height="5.7" fill="#f0f000" opacity="0.61"/>
<rect x="451.8" y="370.3" width="1.2" height="3.2" fill="#f0f000" opacity="0.65"/>
<rect x="476.8" y="335.7" width="1.2" height="7.4" fill="#f0f000" opacity="0.87"/>
<rect x="470.2" y="364.7" width="1.2" height="3.6" fill="#f0f000" opacity="0.62"/>
<rect x="454.8" y="367.2" width="1.2" height="4.8" fill="#f0f000" opacity="0.63"/>
<rect x="482.0" y="367.5" width="1.2" height="8.9" fill="#f0f000" opacity="0.63"/>
<rect x="465.6" y="362.1" width="1.2" height="5.9" fill="#f0f000" opacity="0.55"/>
<rect x="462.9" y="336.4" width="1.2" height="5.3" fill="#f0f000" opacity="0.89"/>
<rect x="480.7" y="357.6" width="1.2" height="6.0" fill="#f0f000" opacity="0.57"/>
<rect x="452.9" y="342.0" width="1.2" height="7.7" fill="#f0f000" opacity="0.83"/>
<rect x="461.6" y="364.6" width="1.2" height="7.6" fill="#f0f000" opacity="0.75"/>
<rect x="471.2" y="363.4" width="1.2" height="5.2" fill="#f0f000" opacity="0.75"/>
<rect x="459.0" y="351.4" width="1.2" height="7.6" fill="#f0f000" opacity="0.75"/>
<rect x="459.4" y="371.6" width="1.2" height="6.9" fill="#f0f000" opacity="0.69"/>
<rect x="483.4" y="203" width="2.2" height="172" fill="#ffec00"/>
<rect x="482.8" y="203" width="0.7" height="172" fill="#ffb800" opacity="0.8"/>
<g fill="none" stroke="#5cf600" stroke-width="2.2" stroke-linecap="round" opacity="0.8" filter="url(#bl1)">
<path d="M221 215 L224 226 L228 232 L232 240 L234 236 L238 233 L240 240 L242 250 L243 290 L245 330"/>
<path d="M340 234 L345 226 L350 220 L354 212 L357 204"/>
<path d="M372 204 L376 212 L380 219 L386 223 L390 228 L393 238 L395 250"/>
<path d="M489 262 L490 250 L492 240 L500 238 L504 230 L510 222 L513 212 L515 204"/>
<path d="M491 256 L500 248 L505 240" opacity="0.5"/>
<path d="M537 204 L541 212 L546 222 L549 226 L553 224 L557 232 L562 244 L566 256 L570 275 L574 300 L580 340 L597 362 L612 368" />
<path d="M612 368 L628 362 L640 340 L646 300 L650 280 L652 268 L656 252 L660 240 L664 228 L670 226 L673 216 L676 210 L679 204"/>
</g>
<g fill="none" stroke="#d8f800" stroke-width="1.5" stroke-linecap="round" opacity="0.9">
<path d="M224 224 L226 229 M230 234 L232 241 M236 232 L239 240"/>
<path d="M380 217 L381 222 M392 232 L394 246" />
<path d="M493 241 L499 239 M493 244 L500 243 M489 250 V256" stroke="#f0f000" stroke-width="2"/>
<path d="M561 243 L564 252" stroke="#e8f800"/>
<path d="M664 229 L667 227 M660 240 L662 235"/>
</g>
<path d="M394 236 L394.5 248" stroke="#ffa000" stroke-width="1.5"/>
<rect x="395" y="257" width="1.5" height="7" fill="#ff9000"/>
<g fill="none" stroke="#f0f000" stroke-width="2" stroke-linecap="round" stroke-dasharray="4 2 7 3 2 2">
<path d="M243 326 L247 336 L250 350 L253 362 L255 372"/>
<path d="M262 360 Q268 366 280 368 Q292 369 300 364" />
<path d="M300 352 L306 346 L312 342 L316 336"/>
<path d="M318 372 Q328 362 332 350 Q335 340 335 325" stroke="#ffd800"/>
<path d="M327 318 L333 308 L335 300" stroke="#c8f000" stroke-width="1.5"/>
</g>
<rect x="251" y="337" width="3" height="6" fill="#f0e800"/>
<rect x="240" y="325" width="1.5" height="5" fill="#ffb800"/>
<rect x="220" y="335" width="1.5" height="4" fill="#f0e000"/>
<rect x="275" y="354" width="8" height="4" fill="#ffc000"/>
<rect x="278" y="353" width="1" height="5" fill="#ff9000"/>
<rect x="281" y="353" width="1" height="5" fill="#ff9000"/>
<rect x="284" y="353" width="1" height="5" fill="#ff9000"/>
<rect x="267" y="363" width="2" height="5" fill="#ffd000"/>
<rect x="274" y="365" width="1.5" height="5" fill="#ffa000"/>
<rect x="279" y="365" width="2.5" height="5" fill="#ffb000"/>
<rect x="306" y="342" width="6" height="7" fill="#ffe600"/>
<rect x="313" y="336" width="2.5" height="5" fill="#ff4000"/>
<rect x="312" y="332" width="5" height="4" fill="#ffd800"/>
<rect x="313" y="348" width="2" height="6" fill="#ffe000"/>
<rect x="312" y="365" width="3" height="10" fill="#ffc400"/>
<rect x="301" y="345" width="1" height="5" fill="#ff9000"/>
<rect x="296" y="346" width="1.5" height="4" fill="#ffa000"/>
<rect x="286" y="350" width="1" height="4" fill="#f0f000"/>
<rect x="262" y="347" width="1" height="4" fill="#f0f000"/>
<rect x="321.7" y="365.4" width="1.2" height="9.7" fill="#ffd800" opacity="0.57"/>
<rect x="327.2" y="356.4" width="1.2" height="4.9" fill="#f0f000" opacity="0.60"/>
<rect x="330.5" y="352.3" width="1.2" height="9.0" fill="#ffd800" opacity="0.76"/>
<rect x="326.5" y="362.6" width="1.2" height="4.0" fill="#f0f000" opacity="0.56"/>
<rect x="329.7" y="344.7" width="1.2" height="9.2" fill="#e0f800" opacity="0.63"/>
<rect x="309.7" y="362.3" width="1.2" height="3.5" fill="#c0f800" opacity="0.53"/>
<rect x="334.2" y="354.1" width="1.2" height="10.0" fill="#e0f800" opacity="0.77"/>
<rect x="318.3" y="355.2" width="1.2" height="5.4" fill="#c0f800" opacity="0.65"/>
<rect x="307.6" y="363.6" width="1.2" height="5.5" fill="#c0f800" opacity="0.65"/>
<rect x="329.2" y="367.5" width="1.2" height="4.7" fill="#e0f800" opacity="0.88"/>
<rect x="321.8" y="350.2" width="1.2" height="4.9" fill="#ffd800" opacity="0.58"/>
<rect x="324.1" y="356.9" width="1.2" height="6.9" fill="#e0f800" opacity="0.60"/>
<rect x="315.2" y="349.8" width="1.2" height="4.2" fill="#f0f000" opacity="0.86"/>
<rect x="323.4" y="347.3" width="1.2" height="3.1" fill="#ffd800" opacity="0.51"/>
<rect x="328.3" y="354.1" width="1.2" height="3.4" fill="#e0f800" opacity="0.62"/>
<rect x="308.3" y="371.6" width="1.2" height="9.4" fill="#f0f000" opacity="0.75"/>
<rect x="321.8" y="342.7" width="1.2" height="6.4" fill="#c0f800" opacity="0.57"/>
<rect x="335.9" y="370.7" width="1.2" height="7.7" fill="#e0f800" opacity="0.52"/>
<rect x="335.2" y="348.4" width="1.2" height="9.2" fill="#ffd800" opacity="0.82"/>
<rect x="307.5" y="369.5" width="1.2" height="3.6" fill="#ffd800" opacity="0.84"/>
<rect x="325.7" y="351.7" width="1.2" height="3.5" fill="#f0f000" opacity="0.72"/>
<rect x="335.4" y="345.6" width="1.2" height="9.7" fill="#e0f800" opacity="0.82"/>
<rect x="307.5" y="368.2" width="1.2" height="7.1" fill="#c0f800" opacity="0.59"/>
<rect x="318.2" y="359.3" width="1.2" height="3.5" fill="#c0f800" opacity="0.80"/>
<rect x="312.9" y="348.8" width="1.2" height="4.3" fill="#ffd800" opacity="0.74"/>
<rect x="334.8" y="357.7" width="1.2" height="6.6" fill="#f0f000" opacity="0.86"/>
<rect x="315.9" y="357.7" width="1.2" height="9.5" fill="#e0f800" opacity="0.75"/>
<rect x="317.0" y="371.9" width="1.2" height="8.3" fill="#ffd800" opacity="0.67"/>
<rect x="319.5" y="341.2" width="1.2" height="3.7" fill="#f0f000" opacity="0.58"/>
<rect x="323.3" y="361.9" width="1.2" height="8.4" fill="#c0f800" opacity="0.69"/>
<rect x="256.0" y="340.1" width="1.2" height="5.7" fill="#c0f800" opacity="0.40"/>
<rect x="247.7" y="371.5" width="1.2" height="7.1" fill="#c0f800" opacity="0.53"/>
<rect x="248.6" y="336.9" width="1.2" height="3.5" fill="#f0f000" opacity="0.68"/>
<rect x="244.4" y="352.5" width="1.2" height="7.5" fill="#f0f000" opacity="0.48"/>
<rect x="254.9" y="363.8" width="1.2" height="7.1" fill="#e0f800" opacity="0.58"/>
<rect x="255.5" y="369.2" width="1.2" height="7.3" fill="#e0f800" opacity="0.74"/>
<rect x="255.1" y="350.8" width="1.2" height="3.3" fill="#f0f000" opacity="0.42"/>
<rect x="257.6" y="344.7" width="1.2" height="4.8" fill="#f0f000" opacity="0.63"/>
<rect x="258.0" y="350.4" width="1.2" height="7.6" fill="#f0f000" opacity="0.70"/>
<rect x="248.7" y="363.0" width="1.2" height="7.2" fill="#e0f800" opacity="0.65"/>
<rect x="256.1" y="347.0" width="1.2" height="3.6" fill="#e0f800" opacity="0.62"/>
<rect x="247.4" y="353.3" width="1.2" height="4.4" fill="#e0f800" opacity="0.50"/>
<rect x="245.0" y="350.6" width="1.2" height="6.4" fill="#c0f800" opacity="0.55"/>
<rect x="247.0" y="371.4" width="1.2" height="6.9" fill="#e0f800" opacity="0.71"/>
<rect x="368" y="331" width="15" height="4.5" fill="#ffe800" opacity="1"/>
<rect x="368" y="339" width="15" height="4" fill="#f0f800" opacity="0.95"/>
<rect x="365" y="334" width="2" height="6" fill="#fff000" opacity="0.9"/>
<rect x="375" y="293" width="2" height="4" fill="#e0f000" opacity="1"/>
<rect x="370" y="293" width="6" height="3" fill="#40f020" opacity="0.9"/>
<rect x="352" y="335" width="4" height="4" fill="#a0f000" opacity="0.9"/>
<rect x="350" y="346" width="7" height="4" fill="#a0f000" opacity="0.8"/>
<rect x="512" y="331" width="5" height="5" fill="#ffd000" opacity="1"/>
<rect x="517" y="332" width="10" height="4" fill="#30f040" opacity="0.8"/>
<rect x="533" y="342" width="18" height="4" fill="#f4f400" opacity="0.95"/>
<rect x="551" y="343" width="6" height="3" fill="#c0f000" opacity="0.8"/>
<rect x="529" y="328" width="2" height="20" fill="#f0f000" opacity="0.9"/>
<rect x="533" y="333" width="8" height="8" fill="#a0f000" opacity="0.7"/>
<rect x="678" y="353" width="3" height="5" fill="#c0f000" opacity="1"/>
<rect x="677" y="333" width="4" height="4" fill="#60f020" opacity="0.8"/>
<rect x="668" y="344" width="2" height="3" fill="#60f020" opacity="0.8"/>
<path d="M352 375 L368 295 L376 295 L390 375" fill="none" stroke="#30f020" stroke-width="1.2" opacity="0.6"/>
<path d="M510 375 L514 338 M540 375 L536 345" fill="none" stroke="#30f020" stroke-width="1.5" opacity="0.5"/>
</g>
<g stroke="#000" stroke-width="1" fill="none" shape-rendering="crispEdges">
<path d="M219.5 377.5 V197.5 H688.5 V377.5 H219"/>
<path d="M208 273.5 H219 M214 242.5 H219 M214 224.5 H219 M214 212.5 H219 M214 202.5 H219 M208 374.5 H219 M214 344.5 H219 M214 326.5 H219 M214 313.5 H219 M214 303.5 H219 M214 295.5 H219 M214 288.5 H219 M214 283.5 H219 M214 277.5 H219"/>
<path d="M220.5 377.5 v5.5 M238.5 377.5 v11.5 M256.5 377.5 v5.5 M274.5 377.5 v5.5 M292.5 377.5 v5.5 M310.5 377.5 v5.5 M328.5 377.5 v5.5 M346.5 377.5 v5.5 M364.5 377.5 v5.5 M382.5 377.5 v5.5 M400.5 377.5 v5.5 M418.5 377.5 v5.5 M436.5 377.5 v5.5 M454.5 377.5 v11.5 M472.5 377.5 v5.5 M490.5 377.5 v5.5 M508.5 377.5 v5.5 M526.5 377.5 v5.5 M544.5 377.5 v5.5 M562.5 377.5 v5.5 M580.5 377.5 v5.5 M598.5 377.5 v5.5 M616.5 377.5 v5.5 M634.5 377.5 v5.5 M652.5 377.5 v5.5 M670.5 377.5 v11.5 M688.5 377.5 v5.5"/>
<path d="M220.5 621.5 v5.5 M238.5 621.5 v11.5 M256.5 621.5 v5.5 M274.5 621.5 v5.5 M292.5 621.5 v5.5 M310.5 621.5 v5.5 M328.5 621.5 v5.5 M346.5 621.5 v5.5 M364.5 621.5 v5.5 M382.5 621.5 v5.5 M400.5 621.5 v5.5 M418.5 621.5 v5.5 M436.5 621.5 v5.5 M454.5 621.5 v11.5 M472.5 621.5 v5.5 M490.5 621.5 v5.5 M508.5 621.5 v5.5 M526.5 621.5 v5.5 M544.5 621.5 v5.5 M562.5 621.5 v5.5 M580.5 621.5 v5.5 M598.5 621.5 v5.5 M616.5 621.5 v5.5 M634.5 621.5 v5.5 M652.5 621.5 v5.5 M670.5 621.5 v11.5 M688.5 621.5 v5.5"/>
<path d="M720.5 198 V377.5 M720 377.5 H732 M720 363.5 H726 M720 350.5 H732 M720 337.5 H726 M720 323.5 H732 M720 310.5 H726 M720 297.5 H732 M720 283.5 H726 M720 270.5 H732 M720 257.5 H726 M720 244.5 H732 M720 230.5 H726 M720 217.5 H732 M720 204.5 H726"/>
<path d="M219.5 621.5 V440.5 H688.5 V621.5 H214"/>
<path d="M208 599.5 H219 M214 580.5 H219 M208 562.5 H219 M214 545.5 H219 M208 529.5 H219 M214 514.5 H219 M208 500.5 H219 M214 487.5 H219 M208 475.5 H219 M214 463.5 H219 M208 451.5 H219 M214 441.5 H219"/>
</g>
<rect x="704" y="198" width="16" height="180" fill="url(#cb)"/>
<text x="454" y="187" text-anchor="middle" letter-spacing="-0.1">RBSP-A/EMFISIS&#160; HFR Spectra Data</text>
<text x="294.4" y="414" textLength="318.6" lengthAdjust="spacing">RBSP-A/ECT-HOPE electron Tperp/Tpar</text>
<text x="173.4" y="283" letter-spacing="-0.17">10<tspan dy="-8">5</tspan></text>
<text x="173.4" y="384" letter-spacing="-0.17">10<tspan dy="-8">4</tspan></text>
<text transform="translate(161,288) rotate(-90)" text-anchor="middle" letter-spacing="-0.17">Hz</text>
<text x="736" y="387.0" letter-spacing="-0.17">10<tspan dy="-7.5" dx="0.2">-22</tspan></text>
<text x="736" y="360.4" letter-spacing="-0.17">10<tspan dy="-7.5" dx="0.2">-20</tspan></text>
<text x="736" y="333.8" letter-spacing="-0.17">10<tspan dy="-7.5" dx="0.2">-18</tspan></text>
<text x="736" y="307.2" letter-spacing="-0.17">10<tspan dy="-7.5" dx="0.2">-16</tspan></text>
<text x="736" y="280.6" letter-spacing="-0.17">10<tspan dy="-7.5" dx="0.2">-14</tspan></text>
<text x="736" y="254.0" letter-spacing="-0.17">10<tspan dy="-7.5" dx="0.2">-12</tspan></text>
<text x="736" y="227.4" letter-spacing="-0.17">10<tspan dy="-7.5" dx="0.2">-10</tspan></text>
<text transform="translate(805,288) rotate(-90)" text-anchor="middle" letter-spacing="-0.17">V^2/m^2/Hz</text>
<text x="216.1" y="409" letter-spacing="-0.17">00:00</text><text x="216.1" y="425" letter-spacing="-0.06">2012-12-02</text>
<text x="648.1" y="409" letter-spacing="-0.17">00:00</text><text x="648.1" y="425" letter-spacing="-0.06">2012-12-03</text>
<text x="201.6" y="456.9" text-anchor="end" letter-spacing="-0.4">2.2</text>
<text x="201.6" y="480.9" text-anchor="end" letter-spacing="-0.4">2.0</text>
<text x="201.6" y="505.9" text-anchor="end" letter-spacing="-0.4">1.8</text>
<text x="201.6" y="534.9" text-anchor="end" letter-spacing="-0.4">1.6</text>
<text x="201.6" y="567.9" text-anchor="end" letter-spacing="-0.4">1.4</text>
<text x="201.6" y="604.9" text-anchor="end" letter-spacing="-0.4">1.2</text>
<text transform="translate(166,531.4) rotate(-90)" text-anchor="middle" letter-spacing="-0.4">e Tperp/Tpar</text>
<text x="260.8" y="653" text-anchor="end" letter-spacing="-0.17">00:00</text>
<text x="476.5" y="653" text-anchor="end" letter-spacing="-0.17">12:00</text>
<text x="692.8" y="653" text-anchor="end" letter-spacing="-0.17">00:00</text>
<text x="260.8" y="673" text-anchor="end" letter-spacing="-0.17">4.225</text>
<text x="476.5" y="673" text-anchor="end" letter-spacing="-0.17">5.756</text>
<text x="692.8" y="673" text-anchor="end" letter-spacing="-0.17">3.179</text>
<text x="260.8" y="693" text-anchor="end" letter-spacing="-0.17">-10.580</text>
<text x="476.5" y="693" text-anchor="end" letter-spacing="-0.17">-1.544</text>
<text x="692.8" y="693" text-anchor="end" letter-spacing="-0.17">-16.190</text>
<text x="260.8" y="713" text-anchor="end" letter-spacing="-0.17">2.247</text>
<text x="476.5" y="713" text-anchor="end" letter-spacing="-0.17">5.398</text>
<text x="692.8" y="713" text-anchor="end" letter-spacing="-0.17">8.125</text>
<text x="260.8" y="733" text-anchor="end" letter-spacing="-0.17">4.373</text>
<text x="476.5" y="733" text-anchor="end" letter-spacing="-0.17">5.760</text>
<text x="692.8" y="733" text-anchor="end" letter-spacing="-0.17">3.447</text>
<text x="167.8" y="673" text-anchor="end" letter-spacing="-0.17">R</text><text x="168.6" y="678.3" font-size="9.3" stroke="#111" stroke-width="0.25">E</text>
<text x="174.5" y="693" text-anchor="end" letter-spacing="-0.17">MLat</text>
<text x="174.8" y="713" text-anchor="end" letter-spacing="-0.17">MLT</text>
<text x="174.3" y="733" text-anchor="end" letter-spacing="-0.17">L</text>
<text x="454" y="756.5" text-anchor="middle" letter-spacing="-0.17">2012-12-01 (336) 23:00 to 2012-12-03 (338) 01:00</text>
<g clip-path="url(#p2)"><polyline fill="none" stroke="#000" stroke-width="1" stroke-linejoin="round" points="219.60,534.3 219.78,531.8 219.96,519.0 220.14,522.7 220.32,522.7 220.50,529.6 220.68,521.8 220.86,511.2 221.04,499.8 221.22,515.5 221.40,519.5 221.58,505.8 221.76,504.9 221.94,495.2 222.12,492.3 222.30,497.4 222.48,491.2 222.66,505.6 222.84,505.2 223.02,505.5 223.20,506.8 223.38,477.9 223.56,487.8 223.74,488.4 223.92,490.4 224.10,483.0 224.28,483.4 224.46,479.8 224.64,493.1 224.82,497.9 225.00,484.6 225.18,491.6 225.36,514.2 225.54,476.0 225.72,466.3 225.90,500.7 226.08,485.5 226.26,475.1 226.44,487.4 226.62,492.4 226.80,466.7 226.98,494.0 227.16,479.1 227.34,470.0 227.52,470.0 227.70,480.6 227.88,474.2 228.06,482.2 228.24,475.5 228.42,460.0 228.60,472.5 228.78,476.0 228.96,471.8 229.14,496.0 229.32,476.2 229.50,498.9 229.68,483.4 229.86,470.2 230.04,480.3 230.22,495.4 230.40,478.5 230.58,471.2 230.76,478.5 230.94,481.2 231.12,487.0 231.30,503.1 231.48,497.3 231.66,479.2 231.84,477.9 232.02,482.6 232.20,500.6 232.38,467.9 232.56,499.0 232.74,461.8 232.92,481.6 233.10,469.9 233.28,486.5 233.46,495.5 233.64,455.0 233.82,483.4 234.00,474.0 234.18,488.0 234.36,479.7 234.54,496.5 234.72,473.2 234.90,495.6 235.08,482.7 235.26,487.5 235.44,490.6 235.62,498.4 235.80,475.5 235.98,488.6 236.16,478.1 236.34,500.2 236.52,462.0 236.70,497.3 236.88,480.5 237.06,472.5 237.24,496.9 237.42,488.3 237.60,474.8 237.78,499.1 237.96,477.3 238.14,506.3 238.32,497.1 238.50,511.4 238.68,514.9 238.86,504.5 239.04,504.6 239.22,506.7 239.40,477.6 239.58,502.6 239.76,468.4 239.94,509.4 240.12,497.4 240.30,507.3 240.48,507.7 240.66,479.7 240.84,498.7 241.02,486.4 241.20,487.7 241.38,496.5 241.56,502.7 241.74,502.0 241.92,494.6 242.10,495.0 242.28,499.6 242.46,513.8 242.64,513.7 242.82,495.5 243.00,506.3 243.18,507.1 243.36,509.4 243.54,502.0 243.72,516.0 243.90,516.8 244.08,505.7 244.26,506.6 244.44,519.4 244.62,512.5 244.80,509.0 244.98,519.3 245.16,533.5 245.34,532.1 245.52,533.1 245.70,537.7 245.88,527.1 246.06,525.9 246.24,532.0 246.42,530.2 246.60,527.3 246.78,521.8 246.96,523.7 247.14,533.7 247.32,517.9 247.50,521.8 247.68,538.9 247.86,535.2 248.04,516.9 248.22,540.2 248.40,535.1 248.58,522.7 248.76,519.1 248.94,522.6 249.12,524.6 249.30,534.2 249.48,527.9 249.66,530.0 249.84,539.1 250.02,530.3 250.20,527.8 250.38,538.4 250.56,539.6 250.74,528.6 250.92,530.6 251.10,541.2 251.28,531.7 251.46,544.3 251.64,528.5 251.82,535.5 252.00,530.5 252.18,543.1 252.36,542.2 252.54,537.0 252.72,537.5 252.90,549.3 253.08,553.2 253.26,540.7 253.44,553.2 253.62,542.2 253.80,548.5 253.98,534.5 254.16,538.0 254.34,533.9 254.52,538.1 254.70,551.7 254.88,539.5 255.06,546.3 255.24,548.9 255.42,540.6 255.60,549.5 255.78,547.6 255.96,551.2 256.14,544.8 256.32,543.8 256.50,544.6 256.68,550.2 256.86,548.5 257.04,548.3 257.22,552.9 257.40,558.6 257.58,557.9 257.76,558.1 257.94,550.8 258.12,561.5 258.30,550.2 258.48,550.1 258.66,562.9 258.84,560.4 259.02,556.6 259.20,556.0 259.38,559.3 259.56,561.8 259.74,560.9 259.92,552.2 260.10,560.2 260.28,553.2 260.46,561.5 260.64,563.0 260.82,555.3 261.00,560.0 261.18,550.9 261.36,562.2 261.54,561.4 261.72,565.7 261.90,550.6 262.08,557.1 262.26,564.0 262.44,565.1 262.62,553.8 262.80,559.3 262.98,560.4 263.16,559.1 263.34,561.5 263.52,557.4 263.70,564.4 263.88,559.2 264.06,559.5 264.24,566.7 264.42,555.8 264.60,563.5 264.78,560.3 264.96,559.5 265.14,563.3 265.32,554.7 265.50,569.6 265.68,560.1 265.86,564.1 266.04,556.2 266.22,561.3 266.40,569.1 266.58,555.9 266.76,557.7 266.94,555.3 267.12,560.9 267.30,560.1 267.48,560.1 267.66,553.7 267.84,561.5 268.02,564.9 268.20,566.2 268.38,569.2 268.56,551.1 268.74,567.1 268.92,561.1 269.10,563.7 269.28,560.5 269.46,564.7 269.64,568.0 269.82,566.4 270.00,569.5 270.18,570.5 270.36,562.0 270.54,562.2 270.72,572.6 270.90,560.6 271.08,566.2 271.26,570.2 271.44,564.0 271.62,564.7 271.80,561.6 271.98,563.8 272.16,566.5 272.34,565.2 272.52,564.7 272.70,570.2 272.88,578.4 273.06,566.7 273.24,574.7 273.42,571.8 273.60,567.9 273.78,573.9 273.96,574.2 274.14,572.7 274.32,572.6 274.50,574.8 274.68,567.3 274.86,572.0 275.04,572.2 275.22,576.9 275.40,576.5 275.58,578.8 275.76,578.7 275.94,578.4 276.12,569.4 276.30,571.0 276.48,574.2 276.66,566.0 276.84,563.6 277.02,566.5 277.20,575.1 277.38,567.4 277.56,570.4 277.74,569.1 277.92,575.4 278.10,576.0 278.28,571.8 278.46,579.8 278.64,572.3 278.82,575.1 279.00,578.5 279.18,567.9 279.36,572.0 279.54,566.3 279.72,568.9 279.90,576.1 280.08,568.4 280.26,583.0 280.44,567.2 280.62,576.5 280.80,578.2 280.98,565.9 281.16,573.3 281.34,573.3 281.52,574.0 281.70,579.8 281.88,574.0 282.06,573.4 282.24,574.6 282.42,576.0 282.60,571.4 282.78,580.4 282.96,574.2 283.14,578.6 283.32,577.7 283.50,572.7 283.68,575.1 283.86,577.3 284.04,572.2 284.22,571.3 284.40,577.9 284.58,575.7 284.76,570.7 284.94,577.6 285.12,578.3 285.30,571.2 285.48,571.4 285.66,577.1 285.84,579.2 286.02,576.4 286.20,568.1 286.38,570.1 286.56,572.4 286.74,576.5 286.92,569.9 287.10,571.1 287.28,572.9 287.46,575.9 287.64,567.0 287.82,570.3 288.00,573.8 288.18,568.4 288.36,570.6 288.54,566.8 288.72,576.7 288.90,571.0 289.08,567.7 289.26,578.1 289.44,579.9 289.62,568.3 289.80,579.8 289.98,574.2 290.16,569.9 290.34,578.7 290.52,570.0 290.70,575.5 290.88,573.2 291.06,575.3 291.24,574.8 291.42,578.4 291.60,572.6 291.78,578.8 291.96,571.5 292.14,577.6 292.32,578.8 292.50,577.7 292.68,570.1 292.86,571.5 293.04,573.9 293.22,577.9 293.40,577.9 293.58,572.9 293.76,576.0 293.94,575.2 294.12,573.2 294.30,579.8 294.48,577.3 294.66,573.2 294.84,574.3 295.02,572.7 295.20,575.7 295.38,567.2 295.56,569.8 295.74,579.0 295.92,573.6 296.10,576.2 296.28,573.7 296.46,576.4 296.64,573.7 296.82,570.0 297.00,567.4 297.18,563.8 297.36,567.6 297.54,572.2 297.72,570.4 297.90,563.5 298.08,560.8 298.26,570.0 298.44,560.3 298.62,561.1 298.80,560.6 298.98,560.7 299.16,561.6 299.34,570.9 299.52,557.6 299.70,565.1 299.88,553.9 300.06,559.0 300.24,563.2 300.42,554.7 300.60,551.7 300.78,557.6 300.96,547.4 301.14,569.2 301.32,545.7 301.50,563.9 301.68,550.7 301.86,561.0 302.04,541.9 302.22,558.0 302.40,557.1 302.58,545.1 302.76,564.3 302.94,561.0 303.12,551.2 303.30,551.6 303.48,560.1 303.66,556.9 303.84,565.6 304.02,558.3 304.20,547.1 304.38,557.9 304.56,560.2 304.74,561.4 304.92,560.0 305.10,559.4 305.28,558.6 305.46,545.4 305.64,553.5 305.82,557.3 306.00,550.7 306.18,545.9 306.36,560.9 306.54,561.9 306.72,551.1 306.90,555.4 307.08,552.6 307.26,542.6 307.44,546.6 307.62,546.1 307.80,548.1 307.98,566.7 308.16,558.3 308.34,566.0 308.52,556.9 308.70,562.1 308.88,549.9 309.06,565.7 309.24,559.9 309.42,557.1 309.60,541.4 309.78,554.7 309.96,547.3 310.14,565.8 310.32,543.7 310.50,554.1 310.68,560.4 310.86,548.3 311.04,565.7 311.22,560.2 311.40,558.5 311.58,566.7 311.76,557.3 311.94,553.7 312.12,568.2 312.30,565.0 312.48,567.1 312.66,558.1 312.84,564.6 313.02,561.6 313.20,556.3 313.38,560.1 313.56,560.9 313.74,558.7 313.92,563.3 314.10,563.2 314.28,570.4 314.46,563.6 314.64,563.2 314.82,564.8 315.00,564.2 315.18,562.1 315.36,557.5 315.54,565.1 315.72,553.1 315.90,555.7 316.08,578.4 316.26,569.3 316.44,556.5 316.62,554.4 316.80,549.5 316.98,553.0 317.16,550.0 317.34,562.6 317.52,556.6 317.70,565.2 317.88,564.8 318.06,554.9 318.24,556.6 318.42,551.2 318.60,556.5 318.78,553.3 318.96,551.5 319.14,546.0 319.32,553.4 319.50,554.6 319.68,556.8 319.86,549.8 320.04,545.4 320.22,548.1 320.40,550.6 320.58,543.1 320.76,553.2 320.94,551.3 321.12,546.3 321.30,546.0 321.48,532.0 321.66,547.8 321.84,546.7 322.02,544.4 322.20,533.2 322.38,528.6 322.56,530.5 322.74,549.0 322.92,543.7 323.10,533.6 323.28,537.6 323.46,534.5 323.64,540.5 323.82,535.9 324.00,528.3 324.18,530.7 324.36,528.0 324.54,537.8 324.72,527.3 324.90,536.1 325.08,534.8 325.26,531.0 325.44,526.5 325.62,527.3 325.80,528.4 325.98,521.5 326.16,525.5 326.34,527.6 326.52,529.9 326.70,529.6 326.88,523.9 327.06,525.5 327.24,517.1 327.42,527.2 327.60,517.2 327.78,531.1 327.96,522.8 328.14,532.5 328.32,513.6 328.50,522.7 328.68,529.4 328.86,512.5 329.04,519.0 329.22,525.3 329.40,524.3 329.58,524.4 329.76,510.0 329.94,514.1 330.12,512.6 330.30,511.4 330.48,505.7 330.66,507.4 330.84,513.3 331.02,510.8 331.20,521.1 331.38,506.9 331.56,517.0 331.74,512.3 331.92,515.1 332.10,516.9 332.28,509.1 332.46,501.2 332.64,505.0 332.82,502.9 333.00,494.9 333.18,504.6 333.36,496.3 333.54,501.4 333.72,487.3 333.90,473.9 334.08,472.0 334.26,501.0 334.44,493.7 334.62,481.1 334.80,479.8 334.98,489.3 335.16,459.0 335.34,483.4 335.52,490.6 335.70,473.2 335.88,482.9 336.06,474.0 336.24,500.4 336.42,480.9 336.60,503.4 336.78,488.9 336.96,468.1 337.14,475.9 337.32,470.5 337.50,495.7 337.68,491.7 337.86,480.0 338.04,485.9 338.22,500.6 338.40,492.9 338.58,500.8 338.76,496.3 338.94,486.2 339.12,488.0 339.30,496.6 339.48,490.8 339.66,483.7 339.84,492.4 340.02,493.7 340.20,482.5 340.38,479.6 340.56,490.7 340.74,482.3 340.92,466.0 341.10,497.6 341.28,482.3 341.46,491.5 341.64,486.3 341.82,490.4 342.00,477.8 342.18,500.4 342.36,486.3 342.54,481.7 342.72,492.6 342.90,486.2 343.08,490.0 343.26,500.7 343.44,495.3 343.62,479.6 343.80,489.4 343.98,463.3 344.16,505.8 344.34,501.2 344.52,498.8 344.70,495.0 344.88,489.8 345.06,475.0 345.24,486.0 345.42,496.1 345.60,501.7 345.78,484.6 345.96,498.4 346.14,489.0 346.32,501.7 346.50,492.4 346.68,494.6 346.86,476.1 347.04,489.3 347.22,496.3 347.40,490.5 347.58,487.7 347.76,497.4 347.94,497.6 348.12,498.8 348.30,464.0 348.48,480.6 348.66,496.5 348.84,496.3 349.02,489.4 349.20,476.5 349.38,497.2 349.56,486.7 349.74,506.8 349.92,484.2 350.10,495.1 350.28,493.7 350.46,477.1 350.64,494.0 350.82,471.8 351.00,485.1 351.18,488.8 351.36,487.5 351.54,486.6 351.72,487.9 351.90,503.5 352.08,495.2 352.26,489.6 352.44,482.8 352.62,485.1 352.80,489.5 352.98,486.5 353.16,509.0 353.34,491.4 353.52,506.9 353.70,495.0 353.88,496.5 354.06,498.8 354.24,504.6 354.42,514.7 354.60,496.2 354.78,509.6 354.96,516.5 355.14,499.3 355.32,511.8 355.50,508.8 355.68,510.3 355.86,520.1 356.04,504.3 356.22,508.7 356.40,501.5 356.58,492.3 356.76,512.2 356.94,541.0 357.12,504.4 357.30,487.9 357.48,508.2 357.66,505.3 357.84,518.7 358.02,486.9 358.20,506.8 358.38,497.8 358.56,513.7 358.74,518.2 358.92,519.5 359.10,541.3 359.28,540.5 359.46,531.9 359.64,544.7 359.82,541.1 360.00,549.0 360.18,553.1 360.36,553.3 360.54,554.9 360.72,559.5 360.90,570.7 361.08,571.0 361.26,572.2 361.44,577.1"/>
<polyline fill="none" stroke="#000" stroke-width="1" stroke-linejoin="round" points="373.10,549.4 373.28,539.3 373.46,538.7 373.64,528.5 373.82,526.2 374.00,520.0 374.18,504.7 374.36,508.7 374.54,498.7 374.72,513.1 374.90,497.1 375.08,497.1 375.26,489.9 375.44,490.2 375.62,494.7 375.80,480.6 375.98,484.8 376.16,474.6 376.34,476.1 376.52,492.5 376.70,483.8 376.88,486.3 377.06,495.3 377.24,483.6 377.42,477.6 377.60,479.1 377.78,489.7 377.96,495.4 378.14,509.2 378.32,475.5 378.50,507.3 378.68,474.8 378.86,503.5 379.04,497.0 379.22,486.5 379.40,495.9 379.58,483.8 379.76,486.9 379.94,500.4 380.12,498.4 380.30,475.0 380.48,481.1 380.66,500.4 380.84,492.3 381.02,496.2 381.20,498.4 381.38,490.4 381.56,486.3 381.74,485.5 381.92,487.8 382.10,504.4 382.28,490.3 382.46,495.7 382.64,479.1 382.82,500.0 383.00,500.1 383.18,479.3 383.36,496.9 383.54,480.4 383.72,501.3 383.90,493.7 384.08,489.3 384.26,487.8 384.44,505.4 384.62,496.0 384.80,510.5 384.98,477.0 385.16,495.7 385.34,502.4 385.52,479.4 385.70,478.3 385.88,499.3 386.06,484.0 386.24,486.4 386.42,472.1 386.60,484.8 386.78,495.8 386.96,463.8 387.14,466.1 387.32,479.2 387.50,485.3 387.68,480.2 387.86,480.3 388.04,487.3 388.22,487.8 388.40,469.7 388.58,466.7 388.76,476.0 388.94,483.4 389.12,468.8 389.30,487.6 389.48,483.9 389.66,446.0 389.84,489.1 390.02,474.9 390.20,486.8 390.38,477.2 390.56,482.9 390.74,483.4 390.92,473.1 391.10,473.4 391.28,479.3 391.46,484.0 391.64,489.8 391.82,489.6 392.00,464.5 392.18,469.0 392.36,499.6 392.54,475.9 392.72,479.1 392.90,488.2 393.08,490.3 393.26,496.1 393.44,501.5 393.62,485.8 393.80,487.0 393.98,474.8 394.16,502.9 394.34,519.7 394.52,481.5 394.70,501.7 394.88,488.8 395.06,479.8 395.24,481.4 395.42,486.8 395.60,481.0 395.78,490.4 395.96,481.7 396.14,490.1 396.32,444.0 396.50,481.7 396.68,473.8 396.86,471.6 397.04,487.6 397.22,474.9 397.40,472.0 397.58,472.0 397.76,466.2 397.94,471.0 398.12,487.3 398.30,492.7 398.48,486.8 398.66,479.1 398.84,488.7 399.02,466.2 399.20,488.3 399.38,467.9 399.56,489.1 399.74,469.7 399.92,470.2 400.10,482.5 400.28,472.7 400.46,472.1 400.64,468.3 400.82,486.2 401.00,491.3 401.18,478.7 401.36,480.9 401.54,476.7 401.72,490.3 401.90,491.1 402.08,495.8 402.26,493.8 402.44,481.8 402.62,497.1 402.80,499.5 402.98,501.2 403.16,509.0 403.34,496.9 403.52,503.7 403.70,494.6 403.88,489.5 404.06,502.6 404.24,487.1 404.42,489.1 404.60,505.5 404.78,504.2 404.96,505.2 405.14,485.7 405.32,508.1 405.50,486.5 405.68,500.7 405.86,497.2 406.04,490.0 406.22,508.6 406.40,493.1 406.58,498.7 406.76,507.4 406.94,483.4 407.12,487.2 407.30,485.5 407.48,498.8 407.66,489.1 407.84,490.5 408.02,501.0 408.20,504.0 408.38,487.4 408.56,502.9 408.74,486.1 408.92,491.3 409.10,488.5 409.28,498.2 409.46,494.5 409.64,492.2 409.82,486.9 410.00,486.3 410.18,493.1 410.36,485.3 410.54,494.8 410.72,484.5 410.90,489.2 411.08,475.6 411.26,492.9 411.44,481.5 411.62,483.5 411.80,489.5 411.98,479.4 412.16,473.7 412.34,467.9 412.52,477.7 412.70,484.6 412.88,476.3 413.06,487.8 413.24,468.1 413.42,488.7 413.60,485.2 413.78,472.8 413.96,495.3 414.14,495.9 414.32,496.2 414.50,494.1 414.68,473.4 414.86,479.8 415.04,493.4 415.22,482.4 415.40,476.7 415.58,493.7 415.76,473.2 415.94,481.2 416.12,483.9 416.30,477.9 416.48,490.4 416.66,489.3 416.84,495.5 417.02,485.8 417.20,480.6 417.38,487.3 417.56,483.6 417.74,482.1 417.92,493.1 418.10,487.3 418.28,483.8 418.46,500.1 418.64,496.5 418.82,499.7 419.00,482.5 419.18,475.4 419.36,490.7 419.54,483.8 419.72,497.2 419.90,484.1 420.08,489.5 420.26,491.5 420.44,483.4 420.62,498.0 420.80,490.9 420.98,499.4 421.16,485.0 421.34,486.7 421.52,496.2 421.70,493.0 421.88,486.4 422.06,480.3 422.24,500.8 422.42,495.0 422.60,486.9 422.78,497.2 422.96,492.7 423.14,493.9 423.32,485.3 423.50,496.1 423.68,486.7 423.86,499.1 424.04,498.5 424.22,501.3 424.40,488.6 424.58,502.2 424.76,502.0 424.94,504.3 425.12,505.7 425.30,508.8 425.48,510.2 425.66,510.9 425.84,510.3 426.02,510.5 426.20,491.9 426.38,497.7 426.56,502.8 426.74,490.3 426.92,485.6 427.10,505.6 427.28,505.0 427.46,495.1 427.64,493.9 427.82,493.3 428.00,489.3 428.18,504.3 428.36,487.2 428.54,508.5 428.72,492.0 428.90,510.3 429.08,493.8 429.26,512.2 429.44,497.0 429.62,505.8 429.80,491.3 429.98,509.1 430.16,501.0 430.34,486.9 430.52,496.5 430.70,490.6 430.88,501.7 431.06,492.9 431.24,492.8 431.42,494.0 431.60,494.2 431.78,502.5 431.96,507.5 432.14,496.4 432.32,497.4 432.50,507.4 432.68,492.5 432.86,496.4 433.04,514.8 433.22,490.9 433.40,510.8 433.58,513.8 433.76,506.2 433.94,506.2 434.12,490.3 434.30,518.0 434.48,500.3 434.66,511.9 434.84,509.2 435.02,500.4 435.20,512.3 435.38,498.0 435.56,513.2 435.74,498.0 435.92,495.2 436.10,509.4 436.28,508.1 436.46,503.0 436.64,509.1 436.82,501.5 437.00,499.4 437.18,490.8 437.36,495.7 437.54,492.2 437.72,497.2 437.90,505.3 438.08,498.2 438.26,508.8 438.44,495.3 438.62,500.5 438.80,492.3 438.98,497.5 439.16,496.6 439.34,493.4 439.52,500.8 439.70,504.4 439.88,493.6 440.06,510.8 440.24,497.5 440.42,493.9 440.60,510.0 440.78,494.7 440.96,501.1 441.14,491.3 441.32,514.5 441.50,500.2 441.68,521.0 441.86,487.8 442.04,509.6 442.22,490.8 442.40,507.1 442.58,513.3 442.76,499.5 442.94,495.6 443.12,516.0 443.30,508.7 443.48,500.3 443.66,513.7 443.84,496.7 444.02,507.7 444.20,506.2 444.38,499.4 444.56,499.0 444.74,500.2 444.92,509.5 445.10,502.6 445.28,505.5 445.46,498.2 445.64,508.3 445.82,494.7 446.00,495.5 446.18,506.1 446.36,496.7 446.54,504.5 446.72,499.4 446.90,503.3 447.08,506.0 447.26,512.0 447.44,503.8 447.62,507.0 447.80,494.1 447.98,490.4 448.16,495.8 448.34,501.9 448.52,494.6 448.70,494.8 448.88,514.0 449.06,501.7 449.24,508.8 449.42,486.9 449.60,498.5 449.78,493.2 449.96,497.4 450.14,514.1 450.32,520.6 450.50,502.6 450.68,511.5 450.86,510.5 451.04,502.7 451.22,498.4 451.40,499.4 451.58,510.2 451.76,510.5 451.94,504.9 452.12,509.6 452.30,506.9 452.48,510.2 452.66,494.2 452.84,498.8 453.02,504.9 453.20,494.9 453.38,499.5 453.56,501.9 453.74,502.0 453.92,488.7 454.10,494.8 454.28,506.8 454.46,498.4 454.64,487.2 454.82,511.4 455.00,502.5 455.18,490.9 455.36,496.3 455.54,497.4 455.72,508.6 455.90,486.2 456.08,496.4 456.26,502.9 456.44,482.2 456.62,504.6 456.80,488.5 456.98,477.6 457.16,490.6 457.34,482.2 457.52,500.9 457.70,486.2 457.88,492.0 458.06,480.7 458.24,483.2 458.42,482.8 458.60,498.1 458.78,491.8 458.96,470.0 459.14,491.5 459.32,498.7 459.50,491.1 459.68,489.6 459.86,492.1 460.04,490.0 460.22,497.8 460.40,485.4 460.58,490.4 460.76,498.6 460.94,490.2 461.12,481.2 461.30,492.4 461.48,484.3 461.66,484.0 461.84,497.9 462.02,476.3 462.20,484.0 462.38,499.1 462.56,491.9 462.74,495.8 462.92,494.0 463.10,489.2 463.28,494.0 463.46,483.2 463.64,482.5 463.82,493.8 464.00,488.4 464.18,498.8 464.36,492.2 464.54,488.8 464.72,495.5 464.90,494.9 465.08,497.3 465.26,493.9 465.44,509.9 465.62,517.4 465.80,501.0 465.98,514.2 466.16,511.1 466.34,506.6 466.52,503.1 466.70,515.8 466.88,508.1 467.06,514.5 467.24,509.9 467.42,512.4 467.60,518.7 467.78,504.3 467.96,502.2 468.14,510.6 468.32,516.1 468.50,508.8 468.68,521.4 468.86,499.9 469.04,519.0 469.22,514.9 469.40,504.6 469.58,503.8 469.76,508.8 469.94,519.7 470.12,519.9 470.30,505.1 470.48,507.3 470.66,514.7 470.84,508.7 471.02,508.1 471.20,512.0 471.38,524.8 471.56,500.9 471.74,503.5 471.92,534.0 472.10,511.7 472.28,513.6 472.46,509.3 472.64,513.7 472.82,512.7 473.00,506.1 473.18,501.5 473.36,520.9 473.54,513.5 473.72,517.7 473.90,520.6 474.08,507.8 474.26,502.8 474.44,512.2 474.62,496.2 474.80,525.0 474.98,518.5 475.16,511.4 475.34,511.8 475.52,501.2 475.70,488.5 475.88,505.1 476.06,492.8 476.24,500.4 476.42,506.5 476.60,483.5 476.78,514.3 476.96,517.0 477.14,489.0 477.32,513.6 477.50,505.0 477.68,487.0 477.86,503.1 478.04,500.6 478.22,515.3 478.40,511.1 478.58,494.1 478.76,502.7 478.94,500.7 479.12,498.4 479.30,507.7 479.48,507.4 479.66,503.9 479.84,501.1 480.02,497.3 480.20,492.4 480.38,495.5 480.56,491.9 480.74,495.2 480.92,500.4 481.10,491.8 481.28,493.1 481.46,505.3 481.64,513.1 481.82,498.5 482.00,486.0 482.18,498.9 482.36,496.2 482.54,483.0 482.72,515.4 482.90,508.2 483.08,512.6 483.26,509.7 483.44,495.3 483.62,486.6 483.80,491.8 483.98,480.9 484.16,488.7 484.34,507.9 484.52,501.3 484.70,523.4 484.88,488.9 485.06,515.0 485.24,500.2 485.42,516.1 485.60,523.4 485.78,522.2 485.96,514.8 486.14,513.1 486.32,511.5 486.50,520.9 486.68,520.2 486.86,525.0 487.04,522.3 487.22,520.1 487.40,513.8 487.58,517.4 487.76,515.7 487.94,530.0 488.12,559.0 488.30,509.5 488.48,517.7 488.66,521.5 488.84,520.9 489.02,519.6 489.20,520.2 489.38,529.2 489.56,512.6 489.74,530.0 489.92,509.9 490.10,520.4 490.28,489.5 490.46,506.5 490.64,525.1 490.82,509.7 491.00,525.8 491.18,506.1 491.36,530.6 491.54,510.1 491.72,524.0 491.90,519.9 492.08,519.2 492.26,507.5 492.44,508.2 492.62,501.3 492.80,514.9 492.98,512.1 493.16,519.8 493.34,512.3 493.52,501.5 493.70,491.1 493.88,509.9 494.06,501.5 494.24,515.5 494.42,498.0 494.60,518.0 494.78,528.2 494.96,519.0 495.14,517.1 495.32,497.1 495.50,501.9 495.68,497.5 495.86,500.7 496.04,526.4 496.22,500.0 496.40,498.4 496.58,486.1 496.76,514.8 496.94,502.6 497.12,499.7 497.30,491.4 497.48,484.2 497.66,484.9 497.84,487.9 498.02,506.6 498.20,497.2 498.38,499.8 498.56,508.0 498.74,482.8 498.92,484.4 499.10,491.9 499.28,503.5 499.46,491.0 499.64,505.9 499.82,486.6 500.00,489.4 500.18,494.5 500.36,497.6 500.54,502.8 500.72,488.4 500.90,505.1 501.08,492.8 501.26,493.0 501.44,493.3 501.62,488.2 501.80,504.6 501.98,492.4 502.16,501.7 502.34,488.1 502.52,487.3 502.70,499.5 502.88,496.5 503.06,481.1 503.24,483.5 503.42,503.2 503.60,490.8 503.78,501.2 503.96,500.1 504.14,493.5 504.32,498.7 504.50,501.1 504.68,504.7 504.86,483.3 505.04,497.9 505.22,477.5 505.40,481.7 505.58,501.4 505.76,491.6 505.94,487.0 506.12,482.3 506.30,490.6 506.48,494.0 506.66,495.8 506.84,497.3 507.02,485.8 507.20,499.9 507.38,497.2 507.56,489.9 507.74,489.2 507.92,495.5 508.10,484.1 508.28,487.4 508.46,483.8 508.64,502.6 508.82,482.1 509.00,484.4 509.18,493.9 509.36,492.2 509.54,483.6 509.72,480.1 509.90,483.4 510.08,502.3 510.26,477.5 510.44,485.3 510.62,476.8 510.80,457.8 510.98,478.2 511.16,506.5 511.34,494.0 511.52,477.1 511.70,492.6 511.88,491.3 512.06,518.6 512.24,514.0 512.42,520.6 512.60,494.8 512.78,486.4 512.96,524.0 513.14,493.3 513.32,523.6 513.50,495.0 513.68,507.9 513.86,512.6 514.04,495.4 514.22,519.5 514.40,502.0 514.58,501.8 514.76,514.5 514.94,504.5 515.12,520.8 515.30,515.8 515.48,497.5 515.66,508.3 515.84,497.5 516.02,506.4 516.20,508.9 516.38,507.4 516.56,488.9 516.74,505.0 516.92,534.9 517.10,536.0 517.28,510.1 517.46,503.2 517.64,502.9 517.82,511.8 518.00,523.6 518.18,533.0 518.36,507.6 518.54,506.2 518.72,483.2 518.90,522.8 519.08,504.4 519.26,492.1 519.44,508.6 519.62,530.4 519.80,504.1 519.98,524.3 520.16,515.8 520.34,540.9 520.52,539.8 520.70,534.7 520.88,535.2 521.06,537.9 521.24,548.1 521.42,537.8 521.60,541.7 521.78,554.8 521.96,555.6 522.14,558.4 522.32,559.9 522.50,564.1"/>
<polyline fill="none" stroke="#000" stroke-width="1" stroke-linejoin="round" points="534.00,577.3 534.18,573.3 534.36,568.0 534.54,554.8 534.72,562.8 534.90,546.2 535.08,535.3 535.26,547.8 535.44,543.7 535.62,541.1 535.80,523.6 535.98,520.7 536.16,532.9 536.34,521.7 536.52,526.7 536.70,530.2 536.88,534.3 537.06,527.2 537.24,511.5 537.42,504.5 537.60,510.4 537.78,499.2 537.96,516.1 538.14,514.6 538.32,526.1 538.50,505.6 538.68,519.9 538.86,505.7 539.04,501.0 539.22,522.4 539.40,505.9 539.58,525.8 539.76,512.5 539.94,504.7 540.12,509.4 540.30,523.2 540.48,513.8 540.66,528.9 540.84,533.0 541.02,519.7 541.20,515.9 541.38,522.2 541.56,501.2 541.74,510.2 541.92,505.0 542.10,521.1 542.28,505.9 542.46,516.9 542.64,502.7 542.82,510.9 543.00,501.4 543.18,500.1 543.36,476.4 543.54,477.9 543.72,476.3 543.90,491.3 544.08,501.4 544.26,484.5 544.44,477.4 544.62,494.7 544.80,479.6 544.98,465.0 545.16,480.3 545.34,486.8 545.52,487.9 545.70,486.4 545.88,493.1 546.06,492.3 546.24,499.0 546.42,503.7 546.60,486.8 546.78,485.2 546.96,492.7 547.14,476.4 547.32,490.2 547.50,493.2 547.68,501.2 547.86,484.1 548.04,478.2 548.22,476.1 548.40,496.7 548.58,487.3 548.76,481.0 548.94,480.0 549.12,461.8 549.30,493.9 549.48,480.6 549.66,490.3 549.84,489.1 550.02,478.8 550.20,477.7 550.38,483.4 550.56,491.3 550.74,495.2 550.92,475.0 551.10,485.3 551.28,479.5 551.46,502.5 551.64,505.9 551.82,464.6 552.00,485.9 552.18,494.9 552.36,502.0 552.54,513.9 552.72,509.0 552.90,498.6 553.08,513.7 553.26,528.2 553.44,496.7 553.62,484.0 553.80,516.0 553.98,525.2 554.16,516.2 554.34,503.1 554.52,519.7 554.70,522.6 554.88,532.2 555.06,519.5 555.24,536.7 555.42,516.8 555.60,510.7 555.78,529.2 555.96,510.0 556.14,529.4 556.32,510.4 556.50,508.5 556.68,527.9 556.86,526.7 557.04,533.7 557.22,534.9 557.40,532.6 557.58,515.1 557.76,544.8 557.94,513.2 558.12,544.1 558.30,551.2 558.48,519.4 558.66,552.7 558.84,549.6 559.02,529.5 559.20,519.7 559.38,566.6 559.56,524.6 559.74,550.9 559.92,546.7 560.10,533.9 560.28,551.7 560.46,549.4 560.64,523.6 560.82,538.9 561.00,563.1 561.18,549.8 561.36,542.0 561.54,533.7 561.72,548.9 561.90,550.6 562.08,527.2 562.26,541.6 562.44,556.2 562.62,532.2 562.80,531.9 562.98,553.8 563.16,549.2 563.34,533.3 563.52,564.9 563.70,554.7 563.88,543.3 564.06,534.6 564.24,554.9 564.42,527.9 564.60,541.0 564.78,535.9 564.96,545.5 565.14,546.5 565.32,558.2 565.50,555.4 565.68,533.3 565.86,572.8 566.04,563.1 566.22,567.6 566.40,593.4 566.58,558.9 566.76,577.2 566.94,587.1 567.12,563.3 567.30,573.9 567.48,572.6 567.66,590.0 567.84,564.0 568.02,541.7 568.20,552.7 568.38,559.1 568.56,572.8 568.74,576.9 568.92,566.0 569.10,567.9 569.28,565.1 569.46,580.9 569.64,578.4 569.82,581.0 570.00,570.7 570.18,573.6 570.36,590.4 570.54,556.2 570.72,582.2 570.90,586.2 571.08,576.3 571.26,576.5 571.44,595.3 571.62,585.3 571.80,596.4 571.98,576.0 572.16,570.1 572.34,580.4 572.52,567.9 572.70,595.1 572.88,565.6 573.06,599.6 573.24,596.1 573.42,588.8 573.60,579.7 573.78,570.4 573.96,608.6 574.14,562.6 574.32,568.0 574.50,594.4 574.68,572.4 574.86,570.7 575.04,589.8 575.22,592.6 575.40,573.6 575.58,597.7 575.76,597.9 575.94,570.0 576.12,590.2 576.30,588.9 576.48,592.2 576.66,594.7 576.84,576.1 577.02,574.9 577.20,583.9 577.38,589.2 577.56,578.6 577.74,576.6 577.92,583.0 578.10,588.4 578.28,590.8 578.46,601.2 578.64,602.8 578.82,601.2 579.00,596.6 579.18,591.5 579.36,591.3 579.54,613.0 579.72,598.7 579.90,597.0 580.08,576.7 580.26,604.4 580.44,579.3 580.62,580.0 580.80,601.8 580.98,598.1 581.16,583.1 581.34,592.2 581.52,571.1 581.70,584.1 581.88,602.2 582.06,569.5 582.24,594.2 582.42,598.7 582.60,580.8 582.78,587.5 582.96,592.3 583.14,575.5 583.32,597.8 583.50,592.5 583.68,582.1 583.86,573.8 584.04,585.9 584.22,591.3 584.40,582.7 584.58,592.2 584.76,574.7 584.94,594.2 585.12,595.4 585.30,586.3 585.48,586.1 585.66,589.5 585.84,582.9 586.02,574.3 586.20,579.1 586.38,581.9 586.56,581.4 586.74,583.5 586.92,576.5 587.10,586.4 587.28,596.6 587.46,599.2 587.64,582.1 587.82,592.2 588.00,577.8 588.18,579.2 588.36,574.3 588.54,590.1 588.72,582.4 588.90,578.8 589.08,582.1 589.26,594.7 589.44,585.5 589.62,582.0 589.80,598.8 589.98,598.2 590.16,588.6 590.34,587.1 590.52,578.0 590.70,597.5 590.88,576.2 591.06,579.4 591.24,579.9 591.42,595.5 591.60,578.3 591.78,583.0 591.96,596.7 592.14,588.3 592.32,595.8 592.50,586.8 592.68,582.3 592.86,588.7 593.04,601.8 593.22,580.6 593.40,597.8 593.58,594.2 593.76,581.7 593.94,596.5 594.12,584.1 594.30,576.3 594.48,599.3 594.66,599.0 594.84,588.7 595.02,583.1 595.20,576.5 595.38,598.8 595.56,588.6 595.74,592.0 595.92,579.8 596.10,581.6 596.28,585.9 596.46,585.6 596.64,600.3 596.82,580.6 597.00,591.3 597.18,584.8 597.36,592.7 597.54,575.9 597.72,584.0 597.90,581.0 598.08,614.0 598.26,595.0 598.44,589.7 598.62,588.2 598.80,593.8 598.98,586.3 599.16,595.3 599.34,593.8 599.52,583.9 599.70,582.2 599.88,580.9 600.06,594.5 600.24,579.4 600.42,579.3 600.60,582.9 600.78,592.6 600.96,581.3 601.14,578.3 601.32,599.6 601.50,588.9 601.68,582.3 601.86,576.1 602.04,582.1 602.22,603.4 602.40,581.5 602.58,591.4 602.76,601.5 602.94,581.3 603.12,579.2 603.30,580.5 603.48,594.6 603.66,581.8 603.84,592.2 604.02,590.5 604.20,596.2 604.38,589.4 604.56,583.1 604.74,586.8 604.92,579.0 605.10,579.5 605.28,594.9 605.46,587.3 605.64,578.1 605.82,587.5 606.00,579.2 606.18,582.2 606.36,580.8 606.54,575.9 606.72,584.0 606.90,573.9 607.08,587.1 607.26,575.4 607.44,573.6 607.62,589.2 607.80,586.5 607.98,593.1 608.16,602.1 608.34,578.1 608.52,582.1 608.70,589.3 608.88,572.0 609.06,588.1 609.24,586.8 609.42,582.1 609.60,581.4 609.78,595.6 609.96,558.1 610.14,568.4 610.32,577.3 610.50,578.7 610.68,574.1 610.86,568.1 611.04,573.1 611.22,582.3 611.40,572.0 611.58,574.7 611.76,581.8 611.94,577.3 612.12,586.6 612.30,579.2 612.48,588.0 612.66,573.9 612.84,579.3 613.02,587.1 613.20,578.7 613.38,575.8 613.56,584.1 613.74,581.5 613.92,578.2 614.10,571.6 614.28,588.8 614.46,589.8 614.64,593.1 614.82,579.9 615.00,584.5 615.18,572.6 615.36,576.1 615.54,569.9 615.72,579.8 615.90,584.9 616.08,569.9 616.26,581.0 616.44,579.9 616.62,571.1 616.80,588.0 616.98,590.5 617.16,571.4 617.34,586.4 617.52,576.7 617.70,585.3 617.88,569.3 618.06,574.5 618.24,583.4 618.42,571.0 618.60,580.1 618.78,578.6 618.96,573.8 619.14,575.5 619.32,576.4 619.50,572.8 619.68,580.5 619.86,572.9 620.04,582.9 620.22,575.9 620.40,576.5 620.58,570.8 620.76,572.2 620.94,584.7 621.12,586.6 621.30,565.3 621.48,569.4 621.66,578.5 621.84,583.4 622.02,584.8 622.20,575.5 622.38,585.1 622.56,582.8 622.74,576.7 622.92,580.5 623.10,577.8 623.28,581.0 623.46,568.9 623.64,566.9 623.82,580.6 624.00,578.3 624.18,579.5 624.36,578.3 624.54,572.0 624.72,581.4 624.90,582.4 625.08,577.4 625.26,568.3 625.44,567.1 625.62,566.3 625.80,580.5 625.98,579.6 626.16,574.3 626.34,576.0 626.52,566.7 626.70,571.4 626.88,564.5 627.06,561.3 627.24,562.2 627.42,568.3 627.60,554.8 627.78,567.0 627.96,566.4 628.14,552.0 628.32,556.4 628.50,574.8 628.68,570.1 628.86,558.8 629.04,572.3 629.22,560.6 629.40,569.4 629.58,551.5 629.76,549.6 629.94,567.0 630.12,553.8 630.30,552.7 630.48,570.4 630.66,551.1 630.84,564.2 631.02,552.1 631.20,565.7 631.38,552.5 631.56,564.4 631.74,567.6 631.92,551.9 632.10,560.3 632.28,566.8 632.46,558.3 632.64,556.4 632.82,569.8 633.00,560.3 633.18,563.4 633.36,546.6 633.54,565.3 633.72,544.7 633.90,550.5 634.08,558.7 634.26,543.7 634.44,550.0 634.62,550.2 634.80,544.7 634.98,556.4 635.16,553.8 635.34,536.7 635.52,541.4 635.70,532.5 635.88,547.7 636.06,538.0 636.24,537.0 636.42,536.4 636.60,524.2 636.78,544.4 636.96,537.8 637.14,536.0 637.32,538.9 637.50,552.1 637.68,533.6 637.86,538.8 638.04,545.6 638.22,530.0 638.40,531.3 638.58,538.9 638.76,550.0 638.94,544.1 639.12,534.4 639.30,532.0 639.48,513.7 639.66,530.8 639.84,533.2 640.02,548.5 640.20,538.8 640.38,542.4 640.56,536.9 640.74,526.2 640.92,545.3 641.10,537.4 641.28,547.0 641.46,543.9 641.64,538.8 641.82,560.5 642.00,543.6 642.18,538.9 642.36,566.4 642.54,562.7 642.72,552.8 642.90,567.3 643.08,577.2 643.26,560.1 643.44,545.3 643.62,563.6 643.80,558.0 643.98,550.8 644.16,553.8 644.34,571.1 644.52,573.4 644.70,588.5 644.88,575.8 645.06,582.0 645.24,556.2 645.42,552.2 645.60,550.8 645.78,553.9 645.96,581.5 646.14,584.3 646.32,568.5 646.50,563.8 646.68,563.4 646.86,576.1 647.04,576.5 647.22,569.1 647.40,557.2 647.58,580.0 647.76,551.9 647.94,576.8 648.12,556.2 648.30,551.6 648.48,560.3 648.66,562.2 648.84,557.0 649.02,552.9 649.20,575.0 649.38,575.0 649.56,556.1 649.74,565.2 649.92,580.6 650.10,545.9 650.28,586.4 650.46,553.5 650.64,581.2 650.82,545.4 651.00,575.7 651.18,561.1 651.36,568.8 651.54,540.3 651.72,565.4 651.90,548.9 652.08,577.5 652.26,575.2 652.44,548.5 652.62,575.4 652.80,547.5 652.98,568.2 653.16,577.5 653.34,571.8 653.52,577.7 653.70,555.6 653.88,574.2 654.06,559.6 654.24,580.1 654.42,587.1 654.60,581.0 654.78,564.2 654.96,576.0 655.14,566.4 655.32,561.4 655.50,553.7 655.68,580.0 655.86,568.2 656.04,562.3 656.22,560.5 656.40,559.8 656.58,558.9 656.76,572.2 656.94,541.6 657.12,572.6 657.30,566.4 657.48,546.1 657.66,532.4 657.84,525.6 658.02,537.1 658.20,557.6 658.38,561.6 658.56,532.1 658.74,538.0 658.92,538.6 659.10,553.6 659.28,551.2 659.46,539.4 659.64,538.4 659.82,548.8 660.00,529.5 660.18,555.6 660.36,545.8 660.54,550.8 660.72,541.6 660.90,543.8 661.08,527.1 661.26,552.7 661.44,555.1 661.62,537.8 661.80,554.8 661.98,538.9 662.16,529.4 662.34,537.7 662.52,532.1 662.70,535.9 662.88,537.5 663.06,537.3 663.24,539.8 663.42,539.3 663.60,529.1 663.78,541.9 663.96,538.6 664.14,537.7 664.32,535.5 664.50,555.1 664.68,523.0 664.86,526.0 665.04,533.7 665.22,544.7 665.40,525.0 665.58,501.2 665.76,529.7 665.94,530.3 666.12,516.7 666.30,518.2 666.48,513.5 666.66,509.1 666.84,500.8 667.02,516.7 667.20,508.0 667.38,520.2 667.56,506.4 667.74,517.5 667.92,519.7 668.10,511.8 668.28,516.8 668.46,515.2 668.64,500.0 668.82,506.4 669.00,518.7 669.18,486.8 669.36,524.1 669.54,507.0 669.72,508.4 669.90,517.6 670.08,595.5 670.26,520.8 670.44,502.3 670.62,516.0 670.80,514.0 670.98,514.2 671.16,497.6 671.34,502.0 671.52,524.8 671.70,517.2 671.88,498.7 672.06,515.7 672.24,489.4 672.42,498.9 672.60,509.0 672.78,495.0 672.96,506.5 673.14,489.0 673.32,489.5 673.50,492.8 673.68,497.5 673.86,512.5 674.04,489.0 674.22,498.7 674.40,507.0 674.58,531.1 674.76,518.9 674.94,498.6 675.12,498.5 675.30,501.8 675.48,512.1 675.66,519.5 675.84,509.4 676.02,507.9 676.20,526.1 676.38,518.9 676.56,528.5 676.74,503.7 676.92,518.6 677.10,517.1 677.28,504.7 677.46,503.2 677.64,495.3 677.82,523.0 678.00,531.4 678.18,507.3 678.36,489.9 678.54,515.2 678.72,534.5 678.90,538.4 679.08,506.5 679.26,516.7 679.44,486.8 679.62,493.3 679.80,532.7 679.98,499.0 680.16,501.8 680.34,526.7 680.52,499.6 680.70,494.3 680.88,503.6 681.06,485.5 681.24,498.4 681.42,514.9 681.60,493.5 681.78,520.5 681.96,525.0 682.14,506.2 682.32,525.2 682.50,531.3 682.68,510.1 682.86,519.6 683.04,531.5 683.22,525.9 683.40,536.1 683.58,537.2 683.76,567.8 683.94,552.1 684.12,564.0 684.30,574.3 684.48,572.8 684.66,575.4 684.84,583.0"/></g>
</svg>
<div class="abs" style="left:346px;top:358px;width:246px;height:90px;box-sizing:border-box;border:1px solid #8c8c8c;border-radius:6px 6px 0 0;background:#dcdcdc;overflow:hidden">
<div class="abs" style="left:0;top:0;width:244px;height:25px;background:linear-gradient(#e6e6e6,#dadada 60%,#cecece)"></div>
<div class="abs" style="left:2px;top:25px;width:240px;height:61px;background:#fdfdfd"></div>
</div>
<svg class="abs" style="left:357px;top:367px" width="14" height="10"><path d="M2 2 L11 2 L6.5 7.5 Z" fill="#a2a2a2"/></svg>
<div class="abs" style="left:400px;top:364.5px;width:137px;text-align:center;font:bold 13.4px 'Liberation Sans',sans-serif;letter-spacing:0.2px;color:#7c7c7c;white-space:nowrap;line-height:17px">Progress Monitor</div>
<svg class="abs" style="left:566px;top:365px" width="14" height="14"><path d="M3 3.5 L10 10.5 M10 3.5 L3 10.5" stroke="#a0a0a0" stroke-width="2.2"/></svg>
<div class="abs" style="left:349px;top:384px;width:240px;text-align:center;font:bold 14px 'DejaVu Sans',sans-serif;color:#1c1c1c;white-space:nowrap;line-height:17px;letter-spacing:-0.05px;-webkit-text-stroke:0.35px rgba(255,255,255,0.75)">running batch</div>
<div class="abs" style="left:349px;top:402px;width:240px;text-align:center;font:bold 8px 'DejaVu Sans',sans-serif;color:#1c1c1c;white-space:nowrap;line-height:10px;letter-spacing:0.2px;-webkit-text-stroke:0.2px rgba(255,255,255,0.7)">write /hom...walk3/product_20121220_00.png</div>
<div class="abs" style="left:349px;top:411px;width:220px;height:20px;box-sizing:border-box;border:1px solid #6f839b;border-top-color:#6382bf;border-left-color:#6382bf;background:#eeeeee"><div style="width:135px;height:18px;background:#a3b8cc"></div></div>
<div class="abs" style="left:569px;top:411px;width:20px;height:20px;box-sizing:border-box;border:1px solid #8a99a8;background:linear-gradient(#fbfdff,#d5e3f2)"></div>
<svg class="abs" style="left:571px;top:413px" width="16" height="16"><defs><linearGradient id="rg1" x1="0" y1="0" x2="0" y2="1"><stop offset="0" stop-color="#f39a9a"/><stop offset="0.45" stop-color="#ea5560"/><stop offset="0.5" stop-color="#e33c4c"/><stop offset="1" stop-color="#e8484a"/></linearGradient></defs><rect x="1.7" y="1.6" width="12.6" height="12.6" rx="2.4" fill="url(#rg1)" stroke="#cf3340" stroke-width="1.1"/><path d="M5.6 5.5 L10.4 10.3 M10.4 5.5 L5.6 10.3" stroke="#f6ecec" stroke-width="2.3" stroke-linecap="round"/></svg>
<div class="abs" style="left:349px;top:430.7px;width:240px;text-align:center;font:bold 12px 'DejaVu Sans',sans-serif;color:#1c1c1c;white-space:nowrap;line-height:16px;letter-spacing:-0.1px;-webkit-text-stroke:0.35px rgba(255,255,255,0.75)">39/62 (49.2/min, eta 29.3 s)</div>
</body></html>
